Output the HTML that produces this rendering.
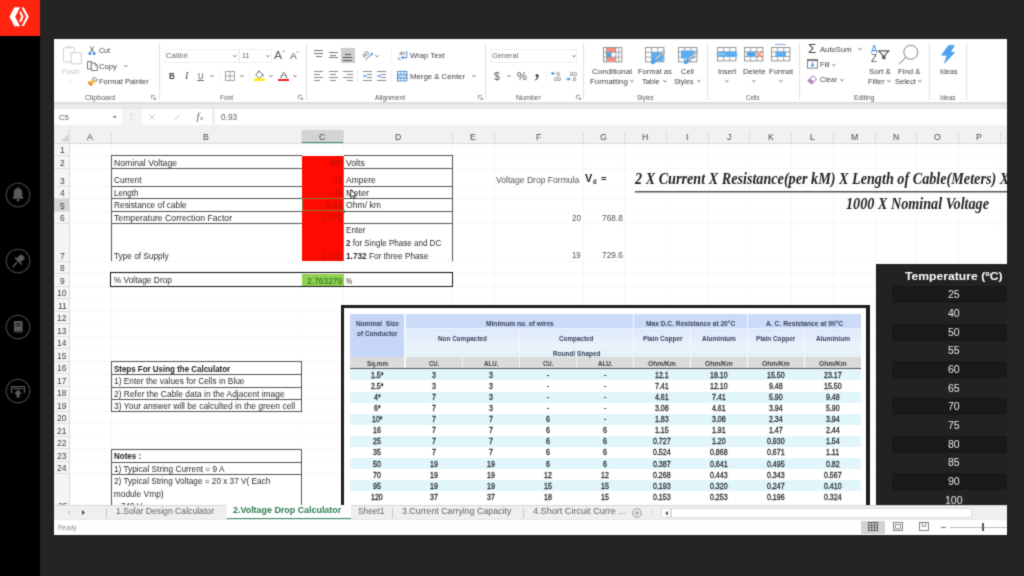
<!DOCTYPE html>
<html lang="en">
<head>
<meta charset="utf-8">
<title>Voltage Drop Calculator</title>
<style>
html,body{margin:0;padding:0;}
body{width:1024px;height:576px;overflow:hidden;background:#242424;position:relative;font-family:'Liberation Sans', sans-serif;}
#stage{position:absolute;left:0;top:0;width:1024px;height:576px;overflow:hidden;filter:url(#soft);}
#stage div,#stage span,#stage svg{position:absolute;}
#stage span{white-space:pre;transform-origin:0 50%;}
#stage svg{overflow:visible;}
#stage svg text{font-family:'Liberation Sans', sans-serif;}
</style>
</head>
<body>
<svg width="0" height="0" style="position:absolute"><defs><filter id="soft" x="0" y="0" width="100%" height="100%" color-interpolation-filters="sRGB"><feConvolveMatrix order="3" kernelMatrix="1 3 1 3 16 3 1 3 1" divisor="32" edgeMode="duplicate" preserveAlpha="true"/></filter></defs></svg>
<div id="stage">
<div style="left:0.00px;top:0.00px;width:1024.00px;height:576.00px;background:#242424;"></div>
<div style="left:0.00px;top:0.00px;width:40.00px;height:576.00px;background:#000;"></div>
<div style="left:0.00px;top:0.00px;width:40.00px;height:36.00px;background:#ff2410;"></div>
<svg style="left:0.00px;top:0.00px;" width="40.00" height="36.00" viewBox="0 0 40 36">
<polygon points="9.5,16.75 14.4,7.2 20.1,7.2 15.2,16.75 20.1,26.2 14.4,26.2" fill="#fff"/>
<polygon points="21.5,7.6 23.9,7.6 28.8,16.75 23.9,25.9 21.5,25.9 26.2,16.75" fill="#fff"/>
<polygon points="19.1,12.2 21.1,11.2 23.7,16.75 21.1,22.3 19.1,21.3 21.2,16.75" fill="#fff"/>
</svg>
<svg style="left:5.30px;top:182.00px;" width="26.00" height="26.00" viewBox="0 0 26 26"><circle cx="13" cy="13" r="11.8" fill="none" stroke="#484848" stroke-width="1.1"/><path d="M13 6.2c-2.7 0-4.3 2-4.3 4.6v3.6l-1.5 2.4h11.6l-1.5-2.4v-3.6c0-2.6-1.6-4.6-4.3-4.6z" fill="#5a5a5a"/><circle cx="13" cy="18.3" r="1.3" fill="#5a5a5a"/><rect x="12.3" y="4.8" width="1.4" height="2" fill="#5a5a5a"/></svg>
<svg style="left:5.30px;top:248.30px;" width="26.00" height="26.00" viewBox="0 0 26 26"><circle cx="13" cy="13" r="11.8" fill="none" stroke="#484848" stroke-width="1.1"/><g fill="#5a5a5a" stroke="#5a5a5a"><path d="M13.2 8.2l3.2-2 3.6 3.8-2.2 3-1.2-.2-2.4 2.2-3.4-3.6 2.4-2.4z" stroke="none"/><line x1="12" y1="14.2" x2="7.6" y2="19.2" stroke-width="1.3"/><line x1="10" y1="9.4" x2="16.8" y2="16.4" stroke-width="1.5"/></g></svg>
<svg style="left:5.30px;top:313.70px;" width="26.00" height="26.00" viewBox="0 0 26 26"><circle cx="13" cy="13" r="11.8" fill="none" stroke="#484848" stroke-width="1.1"/><rect x="9" y="7" width="8.6" height="11.6" rx="0.8" fill="#5a5a5a"/><rect x="10.6" y="9" width="5.4" height="1.1" fill="#222"/><rect x="10.6" y="11" width="5.4" height="1.1" fill="#222"/><rect x="9" y="17" width="8.6" height="0.8" fill="#222"/></svg>
<svg style="left:5.30px;top:377.60px;" width="26.00" height="26.00" viewBox="0 0 26 26"><circle cx="13" cy="13" r="11.8" fill="none" stroke="#484848" stroke-width="1.1"/><path d="M6.6 15V8.6h12.8V15" fill="none" stroke="#5a5a5a" stroke-width="1.3"/><rect x="8.4" y="10.2" width="9.2" height="1.1" fill="#5a5a5a"/><path d="M13 11.6l4 4.4h-2.4v3.6h-3.2V16H9z" fill="#5a5a5a"/></svg>
<div style="left:54.00px;top:39.00px;width:953.00px;height:495.50px;background:#fff;"></div>
<div style="left:54.00px;top:102.00px;width:953.00px;height:7.00px;background:#e9e9e9;"></div>
<div style="left:54.00px;top:102.00px;width:953.00px;height:1.50px;background:#dedede;"></div>
<div style="left:54.00px;top:109.00px;width:953.00px;height:15.50px;background:#fff;"></div>
<div style="left:54.00px;top:124.50px;width:953.00px;height:19.00px;background:#f1f1f1;"></div>
<div style="left:121.50px;top:109.00px;width:20.00px;height:15.50px;background:#f3f3f3;"></div>
<div style="left:212.00px;top:109.00px;width:2.80px;height:15.50px;background:#f0f0f0;"></div>
<span style="left:59.00px;top:112.10px;transform:scaleX(0.948);font:normal 400 8.0px/11.20px 'Liberation Sans', sans-serif;color:#5a5a5a;">C5</span>
<svg style="left:113.40px;top:116.20px;" width="3.60" height="2.20" viewBox="0 0 3.6 2.2"><polygon points="0,0 3.6,0 1.8,2.2" fill="#666"/></svg>
<div style="left:130.60px;top:113.60px;width:1.00px;height:1.00px;background:#bbb;"></div>
<div style="left:130.60px;top:116.40px;width:1.00px;height:1.00px;background:#bbb;"></div>
<div style="left:130.60px;top:119.20px;width:1.00px;height:1.00px;background:#bbb;"></div>
<svg style="left:148.80px;top:114.20px;" width="6.00" height="6.00" viewBox="0 0 6 6"><path d="M0.5 0.5L5.5 5.5M5.5 0.5L0.5 5.5" stroke="#c4c4c4" stroke-width="0.9" fill="none"/></svg>
<svg style="left:172.60px;top:114.20px;" width="7.00" height="6.00" viewBox="0 0 7 6"><path d="M0.5 3.4L2.6 5.4L6.5 0.6" stroke="#c4c4c4" stroke-width="0.9" fill="none"/></svg>
<span style="left:196.60px;top:110.15px;font:italic 400 10.5px/14.70px 'Liberation Serif', serif;color:#666;">f</span>
<span style="left:199.90px;top:114.00px;font:italic 400 7px/9.80px 'Liberation Serif', serif;color:#666;">x</span>
<span style="left:221.20px;top:111.40px;transform:scaleX(0.918);font:normal 400 9.0px/12.60px 'Liberation Sans', sans-serif;color:#606060;">0.93</span>
<svg style="left:63.00px;top:45.00px;" width="19.00" height="19.50" viewBox="0 0 19 19.5">
<rect x="0.5" y="2.6" width="11" height="14.4" rx="1" fill="#fff" stroke="#cfcfcf" stroke-width="1"/>
<path d="M3.4 2.8L6 0.6L8.6 2.8Z" fill="#fff" stroke="#cfcfcf" stroke-width="0.9"/>
<rect x="8.2" y="7.6" width="10" height="11.2" fill="#fff" stroke="#cfcfcf" stroke-width="1"/></svg>
<span style="left:62.30px;top:66.62px;transform:scaleX(0.926);font:normal 400 7.4px/10.36px 'Liberation Sans', sans-serif;color:#c8c8c8;">Paste</span>
<svg style="left:69.38px;top:80.28px;" width="2.64" height="1.56" viewBox="0 0 4.4 2.6"><polyline points="0.3,0.3 2.2,2.2 4.1,0.3" fill="none" stroke="#d4d4d4" stroke-width="1.05"/></svg>
<svg style="left:88.00px;top:46.00px;" width="8.00" height="9.40" viewBox="0 0 8 9.4"><path d="M2 0.4L5.6 6.2M6 0.4L2.4 6.2" stroke="#666" stroke-width="0.9" fill="none"/>
<circle cx="1.9" cy="7.6" r="1.5" fill="#4b8fdc"/><circle cx="6.1" cy="7.6" r="1.5" fill="#4b8fdc"/></svg>
<span style="left:99.30px;top:46.02px;transform:scaleX(0.955);font:normal 400 7.4px/10.36px 'Liberation Sans', sans-serif;color:#3e3e3e;">Cut</span>
<svg style="left:86.50px;top:61.00px;" width="11.00" height="10.00" viewBox="0 0 11 10"><path d="M0.5 0.5H4.4V8H0.5Z" fill="#fff" stroke="#666" stroke-width="0.9"/>
<path d="M4.2 2H8L10.3 4.3V9.5H4.2Z" fill="#fff" stroke="#666" stroke-width="0.9"/><path d="M8 2V4.3H10.3" fill="none" stroke="#666" stroke-width="0.8"/></svg>
<span style="left:99.30px;top:62.02px;transform:scaleX(1.025);font:normal 400 7.4px/10.36px 'Liberation Sans', sans-serif;color:#3e3e3e;">Copy</span>
<svg style="left:123.85px;top:65.19px;" width="3.70" height="2.18" viewBox="0 0 4.4 2.6"><polyline points="0.3,0.3 2.2,2.2 4.1,0.3" fill="none" stroke="#555" stroke-width="1.05"/></svg>
<svg style="left:87.00px;top:76.50px;" width="11.00" height="9.60" viewBox="0 0 11 9.6"><path d="M6.6 0.4L10.4 2.4L9.2 4.6L5.4 2.6Z" fill="#fff" stroke="#666" stroke-width="0.8"/>
<path d="M5.6 2.8L8.4 4.6L4.2 9.2L0.6 5.6Z" fill="#f8bf45"/><path d="M0.6 5.6L4.2 9.2L5.4 7.8L1.8 4.6Z" fill="#ea6a3a"/></svg>
<span style="left:99.30px;top:77.22px;transform:scaleX(1.017);font:normal 400 7.4px/10.36px 'Liberation Sans', sans-serif;color:#3e3e3e;">Format Painter</span>
<span style="left:84.50px;top:92.90px;transform:scaleX(1.011);font:normal 400 7px/9.80px 'Liberation Sans', sans-serif;color:#585858;">Clipboard</span>
<svg style="left:151.20px;top:95.00px;" width="5.00" height="5.00" viewBox="0 0 5 5"><path d="M0.4 4V0.4H4" fill="none" stroke="#888" stroke-width="0.8"/><path d="M1.8 1.8L4.4 4.4M4.4 2.4V4.4H2.4" fill="none" stroke="#888" stroke-width="0.8"/></svg>
<div style="left:158.50px;top:43.00px;width:1.00px;height:57.00px;background:#e2e2e2;"></div>
<div style="left:164.80px;top:48.50px;width:74.20px;height:14.30px;box-sizing:border-box;border:1px solid #efefef;background:#fff;"></div>
<div style="left:238.50px;top:48.50px;width:33.00px;height:14.30px;box-sizing:border-box;border:1px solid #efefef;background:#fff;"></div>
<span style="left:166.20px;top:51.04px;transform:scaleX(0.986);font:normal 400 7.8px/10.92px 'Liberation Sans', sans-serif;color:#666;">Calibri</span>
<svg style="left:233.15px;top:55.29px;" width="3.70" height="2.18" viewBox="0 0 4.4 2.6"><polyline points="0.3,0.3 2.2,2.2 4.1,0.3" fill="none" stroke="#555" stroke-width="1.05"/></svg>
<span style="left:241.60px;top:51.04px;transform:scaleX(0.914);font:normal 400 7.8px/10.92px 'Liberation Sans', sans-serif;color:#666;">11</span>
<svg style="left:265.85px;top:55.29px;" width="3.70" height="2.18" viewBox="0 0 4.4 2.6"><polyline points="0.3,0.3 2.2,2.2 4.1,0.3" fill="none" stroke="#555" stroke-width="1.05"/></svg>
<span style="left:274.30px;top:47.28px;transform:scaleX(1.047);font:normal 400 11.6px/16.24px 'Liberation Sans', sans-serif;color:#5a5a5a;">A</span>
<svg style="left:282.00px;top:50.20px;" width="3.40" height="2.20" viewBox="0 0 3.4 2.2"><polyline points="0.3,1.9 1.7,0.4 3.1,1.9" fill="none" stroke="#4b8fdc" stroke-width="0.8"/></svg>
<span style="left:290.00px;top:49.38px;transform:scaleX(1.061);font:normal 400 9.6px/13.44px 'Liberation Sans', sans-serif;color:#555;">A</span>
<svg style="left:296.40px;top:50.90px;" width="3.40" height="2.20" viewBox="0 0 3.4 2.2"><polyline points="0.3,0.4 1.7,1.9 3.1,0.4" fill="none" stroke="#4b8fdc" stroke-width="0.8"/></svg>
<span style="left:168.70px;top:69.28px;transform:scaleX(0.836);font:normal 700 9.6px/13.44px 'Liberation Sans', sans-serif;color:#444;">B</span>
<span style="left:184.60px;top:69.14px;transform:scaleX(1.041);font:italic 400 9.8px/13.72px 'Liberation Serif', serif;color:#555;">I</span>
<span style="left:197.70px;top:69.78px;transform:scaleX(0.884);font:normal 400 8.6px/12.04px 'Liberation Sans', sans-serif;color:#555;">U</span>
<div style="left:197.20px;top:79.65px;width:6.40px;height:0.90px;background:#666;"></div>
<svg style="left:210.45px;top:75.39px;" width="3.70" height="2.18" viewBox="0 0 4.4 2.6"><polyline points="0.3,0.3 2.2,2.2 4.1,0.3" fill="none" stroke="#555" stroke-width="1.05"/></svg>
<div style="left:219.80px;top:70.00px;width:1.00px;height:12.00px;background:#f0f0f0;"></div>
<svg style="left:224.80px;top:71.00px;" width="10.00" height="10.00" viewBox="0 0 10 10"><rect x="0.5" y="0.5" width="9" height="9" fill="none" stroke="#9a9a9a" stroke-width="0.9"/><path d="M5 0.5V9.5M0.5 5H9.5" stroke="#9a9a9a" stroke-width="0.9"/></svg>
<svg style="left:239.95px;top:75.39px;" width="3.70" height="2.18" viewBox="0 0 4.4 2.6"><polyline points="0.3,0.3 2.2,2.2 4.1,0.3" fill="none" stroke="#555" stroke-width="1.05"/></svg>
<div style="left:249.30px;top:70.00px;width:1.00px;height:12.00px;background:#f0f0f0;"></div>
<svg style="left:254.00px;top:70.40px;" width="11.00" height="11.00" viewBox="0 0 11 11"><path d="M5 1L9 5L5 8.4L1.6 5Z" fill="#fff" stroke="#666" stroke-width="0.9"/>
<path d="M3.4 3L6 0.6" stroke="#666" stroke-width="0.8" fill="none"/>
<path d="M8.8 3.4Q10.4 5.6 9.6 6.6Q8.4 6.4 8.8 3.4Z" fill="#3b7dd8"/>
<rect x="0" y="8.3" width="10.8" height="2.7" fill="#ffe81a"/></svg>
<svg style="left:268.85px;top:75.39px;" width="3.70" height="2.18" viewBox="0 0 4.4 2.6"><polyline points="0.3,0.3 2.2,2.2 4.1,0.3" fill="none" stroke="#555" stroke-width="1.05"/></svg>
<span style="left:279.80px;top:68.38px;transform:scaleX(1.171);font:normal 400 9.6px/13.44px 'Liberation Sans', sans-serif;color:#555;">A</span>
<div style="left:278.20px;top:78.80px;width:10.80px;height:2.60px;background:#ee1c1c;"></div>
<svg style="left:293.45px;top:75.39px;" width="3.70" height="2.18" viewBox="0 0 4.4 2.6"><polyline points="0.3,0.3 2.2,2.2 4.1,0.3" fill="none" stroke="#555" stroke-width="1.05"/></svg>
<span style="left:220.20px;top:92.90px;transform:scaleX(0.928);font:normal 400 7px/9.80px 'Liberation Sans', sans-serif;color:#585858;">Font</span>
<svg style="left:298.20px;top:95.00px;" width="5.00" height="5.00" viewBox="0 0 5 5"><path d="M0.4 4V0.4H4" fill="none" stroke="#888" stroke-width="0.8"/><path d="M1.8 1.8L4.4 4.4M4.4 2.4V4.4H2.4" fill="none" stroke="#888" stroke-width="0.8"/></svg>
<div style="left:305.80px;top:43.00px;width:1.00px;height:57.00px;background:#e2e2e2;"></div>
<div style="left:314.00px;top:50.25px;width:9.30px;height:0.90px;background:#777;"></div>
<div style="left:314.00px;top:53.05px;width:9.30px;height:0.90px;background:#777;"></div>
<div style="left:315.65px;top:55.75px;width:6.00px;height:0.90px;background:#777;"></div>
<div style="left:328.70px;top:51.75px;width:9.30px;height:0.90px;background:#777;"></div>
<div style="left:330.35px;top:54.65px;width:6.00px;height:0.90px;background:#777;"></div>
<div style="left:328.70px;top:57.35px;width:9.30px;height:0.90px;background:#777;"></div>
<div style="left:340.50px;top:48.20px;width:14.80px;height:14.80px;background:#cdcdcd;"></div>
<div style="left:344.85px;top:53.95px;width:6.00px;height:0.90px;background:#555;"></div>
<div style="left:343.20px;top:56.85px;width:9.30px;height:0.90px;background:#555;"></div>
<div style="left:343.20px;top:59.65px;width:9.30px;height:0.90px;background:#555;"></div>
<svg style="left:362.00px;top:50.00px;" width="12.00" height="11.00" viewBox="0 0 12 11"><text x="0.2" y="6.6" font-size="6.6" fill="#666" transform="rotate(-38 3 5)">ab</text>
<path d="M3.4 9.8L10.4 3.6" stroke="#3b7dd8" stroke-width="1" fill="none"/><path d="M10.9 3.1L8.4 3.5L10.4 5.6Z" fill="#3b7dd8"/></svg>
<svg style="left:375.35px;top:55.29px;" width="3.70" height="2.18" viewBox="0 0 4.4 2.6"><polyline points="0.3,0.3 2.2,2.2 4.1,0.3" fill="none" stroke="#555" stroke-width="1.05"/></svg>
<div style="left:390.80px;top:49.00px;width:1.00px;height:13.00px;background:#f0f0f0;"></div>
<svg style="left:398.00px;top:50.40px;" width="9.60" height="10.60" viewBox="0 0 9.6 10.6"><text x="1.2" y="4.9" font-size="5.6" fill="#666">ab</text>
<text x="0" y="10" font-size="5.6" fill="#666">c</text>
<path d="M8.8 1V7.6H4.6" stroke="#3b7dd8" stroke-width="0.9" fill="none"/><path d="M3.2 7.6L5.4 5.8V9.4Z" fill="#3b7dd8"/></svg>
<span style="left:409.70px;top:51.18px;transform:scaleX(1.018);font:normal 400 7.6px/10.64px 'Liberation Sans', sans-serif;color:#3e3e3e;">Wrap Text</span>
<div style="left:314.00px;top:71.45px;width:9.30px;height:0.90px;background:#8a8a8a;"></div>
<div style="left:314.00px;top:74.15px;width:6.00px;height:0.90px;background:#8a8a8a;"></div>
<div style="left:314.00px;top:76.95px;width:9.30px;height:0.90px;background:#8a8a8a;"></div>
<div style="left:314.00px;top:79.65px;width:6.00px;height:0.90px;background:#8a8a8a;"></div>
<div style="left:328.70px;top:71.45px;width:9.30px;height:0.90px;background:#8a8a8a;"></div>
<div style="left:330.35px;top:74.15px;width:6.00px;height:0.90px;background:#8a8a8a;"></div>
<div style="left:328.70px;top:76.95px;width:9.30px;height:0.90px;background:#8a8a8a;"></div>
<div style="left:330.35px;top:79.65px;width:6.00px;height:0.90px;background:#8a8a8a;"></div>
<div style="left:343.40px;top:71.45px;width:9.30px;height:0.90px;background:#8a8a8a;"></div>
<div style="left:346.70px;top:74.15px;width:6.00px;height:0.90px;background:#8a8a8a;"></div>
<div style="left:343.40px;top:76.95px;width:9.30px;height:0.90px;background:#8a8a8a;"></div>
<div style="left:346.70px;top:79.65px;width:6.00px;height:0.90px;background:#8a8a8a;"></div>
<div style="left:357.00px;top:70.00px;width:1.00px;height:12.00px;background:#f0f0f0;"></div>
<div style="left:362.50px;top:71.45px;width:9.30px;height:0.90px;background:#8a8a8a;"></div>
<div style="left:362.50px;top:79.65px;width:9.30px;height:0.90px;background:#8a8a8a;"></div>
<div style="left:366.70px;top:74.15px;width:5.10px;height:0.90px;background:#8a8a8a;"></div>
<div style="left:366.70px;top:76.95px;width:5.10px;height:0.90px;background:#8a8a8a;"></div>
<svg style="left:362.50px;top:74.00px;" width="4.00" height="4.00" viewBox="0 0 4 4"><path d="M3.8 2H1" stroke="#3b7dd8" stroke-width="0.9"/><path d="M0 2L1.8 0.4V3.6Z" fill="#3b7dd8"/></svg>
<div style="left:377.20px;top:71.45px;width:9.30px;height:0.90px;background:#8a8a8a;"></div>
<div style="left:377.20px;top:79.65px;width:9.30px;height:0.90px;background:#8a8a8a;"></div>
<div style="left:381.40px;top:74.15px;width:5.10px;height:0.90px;background:#8a8a8a;"></div>
<div style="left:381.40px;top:76.95px;width:5.10px;height:0.90px;background:#8a8a8a;"></div>
<svg style="left:377.20px;top:74.00px;" width="4.00" height="4.00" viewBox="0 0 4 4"><path d="M0.2 2H3" stroke="#3b7dd8" stroke-width="0.9"/><path d="M4 2L2.2 0.4V3.6Z" fill="#3b7dd8"/></svg>
<div style="left:390.80px;top:70.00px;width:1.00px;height:12.00px;background:#f0f0f0;"></div>
<svg style="left:396.70px;top:70.70px;" width="10.40" height="10.40" viewBox="0 0 10.4 10.4"><rect x="0.5" y="0.5" width="9.4" height="9.4" fill="#fff" stroke="#4a86c8" stroke-width="0.9"/>
<rect x="0.5" y="3.2" width="9.4" height="4" fill="#8ec2f2" stroke="#4a86c8" stroke-width="0.7"/>
<path d="M3.5 0.5V3.2M6.9 0.5V3.2M3.5 7.2V9.9M6.9 7.2V9.9" stroke="#4a86c8" stroke-width="0.7"/>
<path d="M1.6 5.2H8.8" stroke="#fff" stroke-width="0.8"/></svg>
<span style="left:409.70px;top:71.68px;transform:scaleX(1.026);font:normal 400 7.6px/10.64px 'Liberation Sans', sans-serif;color:#3e3e3e;">Merge &amp; Center</span>
<svg style="left:471.85px;top:75.39px;" width="3.70" height="2.18" viewBox="0 0 4.4 2.6"><polyline points="0.3,0.3 2.2,2.2 4.1,0.3" fill="none" stroke="#555" stroke-width="1.05"/></svg>
<span style="left:374.50px;top:92.90px;transform:scaleX(0.970);font:normal 400 7px/9.80px 'Liberation Sans', sans-serif;color:#585858;">Alignment</span>
<svg style="left:477.50px;top:95.00px;" width="5.00" height="5.00" viewBox="0 0 5 5"><path d="M0.4 4V0.4H4" fill="none" stroke="#888" stroke-width="0.8"/><path d="M1.8 1.8L4.4 4.4M4.4 2.4V4.4H2.4" fill="none" stroke="#888" stroke-width="0.8"/></svg>
<div style="left:484.50px;top:43.00px;width:1.00px;height:57.00px;background:#e2e2e2;"></div>
<div style="left:490.30px;top:48.50px;width:87.20px;height:14.30px;box-sizing:border-box;border:1px solid #efefef;background:#fff;"></div>
<span style="left:492.00px;top:51.04px;transform:scaleX(0.948);font:normal 400 7.8px/10.92px 'Liberation Sans', sans-serif;color:#666;">General</span>
<svg style="left:571.95px;top:55.29px;" width="3.70" height="2.18" viewBox="0 0 4.4 2.6"><polyline points="0.3,0.3 2.2,2.2 4.1,0.3" fill="none" stroke="#555" stroke-width="1.05"/></svg>
<span style="left:494.20px;top:68.80px;transform:scaleX(0.947);font:normal 400 11px/15.40px 'Liberation Sans', sans-serif;color:#555;">$</span>
<svg style="left:507.35px;top:75.39px;" width="3.70" height="2.18" viewBox="0 0 4.4 2.6"><polyline points="0.3,0.3 2.2,2.2 4.1,0.3" fill="none" stroke="#555" stroke-width="1.05"/></svg>
<span style="left:517.00px;top:68.80px;transform:scaleX(1.022);font:normal 400 11px/15.40px 'Liberation Sans', sans-serif;color:#555;">%</span>
<span style="left:534.20px;top:65.50px;transform:scaleX(0.791);font:normal 700 22px/30.80px 'Liberation Serif', serif;color:#444;">’</span>
<div style="left:545.80px;top:70.00px;width:1.00px;height:12.00px;background:#f0f0f0;"></div>
<svg style="left:550.80px;top:71.00px;" width="10.40" height="10.40" viewBox="0 0 10.4 10.4"><path d="M0.8 2.4H4.4" stroke="#3b7dd8" stroke-width="1"/><path d="M0 2.4L2 0.6V4.2Z" fill="#3b7dd8"/>
<text x="5.6" y="4.8" font-size="6" fill="#555">0</text><text x="1.6" y="10.2" font-size="6" fill="#555">.00</text></svg>
<svg style="left:565.80px;top:71.00px;" width="10.40" height="10.40" viewBox="0 0 10.4 10.4"><text x="2.4" y="4.8" font-size="6" fill="#555">.00</text>
<path d="M0 8H3.6" stroke="#3b7dd8" stroke-width="1"/><path d="M4.6 8L2.6 6.2V9.8Z" fill="#3b7dd8"/>
<text x="5.2" y="10.2" font-size="6" fill="#555">.0</text></svg>
<span style="left:515.80px;top:92.90px;transform:scaleX(0.992);font:normal 400 7px/9.80px 'Liberation Sans', sans-serif;color:#585858;">Number</span>
<svg style="left:575.50px;top:95.00px;" width="5.00" height="5.00" viewBox="0 0 5 5"><path d="M0.4 4V0.4H4" fill="none" stroke="#888" stroke-width="0.8"/><path d="M1.8 1.8L4.4 4.4M4.4 2.4V4.4H2.4" fill="none" stroke="#888" stroke-width="0.8"/></svg>
<div style="left:582.50px;top:43.00px;width:1.00px;height:57.00px;background:#e2e2e2;"></div>
<svg style="left:603.00px;top:46.80px;" width="19.40" height="15.40" viewBox="0 0 19.4 15.4"><rect x="0.5" y="0.5" width="18.4" height="14.4" fill="#fff" stroke="#8c8c8c" stroke-width="0.9"/>
<rect x="3.4" y="0.9" width="9.4" height="4.4" fill="#f58d80"/><rect x="3.4" y="10.1" width="9.4" height="4.4" fill="#f58d80"/>
<rect x="3.4" y="5.3" width="5.2" height="4.8" fill="#5a9fe8"/>
<path d="M0.5 5.3H18.9M0.5 10.1H18.9M3.4 0.5V14.9M12.8 0.5V14.9M15.8 0.5V14.9" stroke="#8c8c8c" stroke-width="0.7"/></svg>
<span style="left:592.00px;top:66.82px;transform:scaleX(1.082);font:normal 400 7.4px/10.36px 'Liberation Sans', sans-serif;color:#3e3e3e;">Conditional</span>
<span style="left:589.70px;top:77.12px;transform:scaleX(1.070);font:normal 400 7.4px/10.36px 'Liberation Sans', sans-serif;color:#3e3e3e;">Formatting</span>
<svg style="left:630.35px;top:80.39px;" width="3.70" height="2.18" viewBox="0 0 4.4 2.6"><polyline points="0.3,0.3 2.2,2.2 4.1,0.3" fill="none" stroke="#555" stroke-width="1.05"/></svg>
<svg style="left:645.00px;top:46.80px;" width="19.40" height="15.40" viewBox="0 0 19.4 15.4"><rect x="0.5" y="0.5" width="18.4" height="14.4" fill="#fff" stroke="#8c8c8c" stroke-width="0.9"/><path d="M0.5 5.3H18.9M0.5 10.1H18.9M6.6 0.5V14.9M12.8 0.5V14.9" stroke="#8c8c8c" stroke-width="0.8"/><rect x="6.6" y="5.3" width="11.6" height="9" fill="#5aaef4"/>
<path d="M19.4 4.2L9.4 13.2" stroke="#777" stroke-width="2.4"/><path d="M19.2 4.4L9.6 13" stroke="#e9f2fb" stroke-width="1.1"/>
<ellipse cx="8.6" cy="14.6" rx="3.2" ry="2" fill="#4ea6f2" transform="rotate(-38 8.6 14.6)"/></svg>
<span style="left:637.50px;top:66.82px;transform:scaleX(1.016);font:normal 400 7.4px/10.36px 'Liberation Sans', sans-serif;color:#3e3e3e;">Format as</span>
<span style="left:642.00px;top:77.12px;font:normal 400 7.4px/10.36px 'Liberation Sans', sans-serif;color:#3e3e3e;">Table</span>
<svg style="left:662.55px;top:80.39px;" width="3.70" height="2.18" viewBox="0 0 4.4 2.6"><polyline points="0.3,0.3 2.2,2.2 4.1,0.3" fill="none" stroke="#555" stroke-width="1.05"/></svg>
<svg style="left:678.00px;top:46.80px;" width="19.40" height="15.40" viewBox="0 0 19.4 15.4"><rect x="0.5" y="0.5" width="18.4" height="14.4" fill="#fff" stroke="#8c8c8c" stroke-width="0.9"/><path d="M0.5 5.3H18.9M0.5 10.1H18.9M6.6 0.5V14.9M12.8 0.5V14.9" stroke="#8c8c8c" stroke-width="0.8"/><rect x="3" y="3.4" width="13.4" height="8.2" fill="#5aaef4"/>
<path d="M19.4 4.2L9.4 13.2" stroke="#777" stroke-width="2.4"/><path d="M19.2 4.4L9.6 13" stroke="#e9f2fb" stroke-width="1.1"/>
<ellipse cx="8.6" cy="14.6" rx="3.2" ry="2" fill="#4ea6f2" transform="rotate(-38 8.6 14.6)"/></svg>
<span style="left:681.30px;top:66.82px;transform:scaleX(1.013);font:normal 400 7.4px/10.36px 'Liberation Sans', sans-serif;color:#3e3e3e;">Cell</span>
<span style="left:674.20px;top:77.12px;transform:scaleX(0.968);font:normal 400 7.4px/10.36px 'Liberation Sans', sans-serif;color:#3e3e3e;">Styles</span>
<svg style="left:696.55px;top:80.39px;" width="3.70" height="2.18" viewBox="0 0 4.4 2.6"><polyline points="0.3,0.3 2.2,2.2 4.1,0.3" fill="none" stroke="#555" stroke-width="1.05"/></svg>
<span style="left:636.70px;top:92.90px;transform:scaleX(0.871);font:normal 400 7px/9.80px 'Liberation Sans', sans-serif;color:#585858;">Styles</span>
<div style="left:707.00px;top:43.00px;width:1.00px;height:57.00px;background:#e2e2e2;"></div>
<svg style="left:716.90px;top:47.00px;" width="19.40" height="15.40" viewBox="0 0 19.4 15.4"><rect x="0.5" y="0.5" width="18.4" height="13.4" fill="#fff" stroke="#8c8c8c" stroke-width="0.9"/><path d="M0.5 4.9H18.9M0.5 9.5H18.9M6.6 0.5V13.9M12.8 0.5V13.9" stroke="#8c8c8c" stroke-width="0.8"/><rect x="2.4" y="4.6" width="17.6" height="5.2" fill="#5aaef4"/>
<path d="M-0.8 7.2L2.6 4.4V10Z" fill="#5aaef4"/><path d="M1.4 7.2H8" stroke="#d6eafb" stroke-width="0.8"/></svg>
<span style="left:717.50px;top:66.82px;transform:scaleX(0.990);font:normal 400 7.4px/10.36px 'Liberation Sans', sans-serif;color:#3e3e3e;">Insert</span>
<svg style="left:724.65px;top:80.39px;" width="3.70" height="2.18" viewBox="0 0 4.4 2.6"><polyline points="0.3,0.3 2.2,2.2 4.1,0.3" fill="none" stroke="#555" stroke-width="1.05"/></svg>
<svg style="left:744.20px;top:47.00px;" width="19.40" height="15.40" viewBox="0 0 19.4 15.4"><rect x="0.5" y="0.5" width="18.4" height="13.4" fill="#fff" stroke="#8c8c8c" stroke-width="0.9"/><path d="M0.5 4.9H18.9M0.5 9.5H18.9M6.6 0.5V13.9M12.8 0.5V13.9" stroke="#8c8c8c" stroke-width="0.8"/><rect x="2.6" y="4.6" width="9" height="5.2" fill="#5aaef4"/>
<path d="M5 7.2H10" stroke="#2f74c0" stroke-width="0.8"/>
<path d="M12.4 4L18.4 10.6M18.4 4L12.4 10.6" stroke="#f0704c" stroke-width="1.1" fill="none"/></svg>
<span style="left:742.50px;top:66.82px;transform:scaleX(1.053);font:normal 400 7.4px/10.36px 'Liberation Sans', sans-serif;color:#3e3e3e;">Delete</span>
<svg style="left:751.55px;top:80.39px;" width="3.70" height="2.18" viewBox="0 0 4.4 2.6"><polyline points="0.3,0.3 2.2,2.2 4.1,0.3" fill="none" stroke="#555" stroke-width="1.05"/></svg>
<div style="left:775.40px;top:44.35px;width:11.00px;height:0.90px;background:#8ab4d8;"></div>
<svg style="left:771.30px;top:47.00px;" width="19.40" height="15.40" viewBox="0 0 19.4 15.4"><rect x="0.5" y="0.5" width="18.4" height="13.4" fill="#fff" stroke="#8c8c8c" stroke-width="0.9"/><path d="M0.5 4.9H18.9M0.5 9.5H18.9M6.6 0.5V13.9M12.8 0.5V13.9" stroke="#8c8c8c" stroke-width="0.8"/><rect x="4.4" y="4.6" width="10.6" height="5.2" fill="#5aaef4"/></svg>
<span style="left:768.70px;top:66.82px;transform:scaleX(1.030);font:normal 400 7.4px/10.36px 'Liberation Sans', sans-serif;color:#3e3e3e;">Format</span>
<svg style="left:778.75px;top:80.39px;" width="3.70" height="2.18" viewBox="0 0 4.4 2.6"><polyline points="0.3,0.3 2.2,2.2 4.1,0.3" fill="none" stroke="#555" stroke-width="1.05"/></svg>
<span style="left:746.20px;top:92.90px;transform:scaleX(0.867);font:normal 400 7px/9.80px 'Liberation Sans', sans-serif;color:#585858;">Cells</span>
<div style="left:799.20px;top:43.00px;width:1.00px;height:57.00px;background:#e2e2e2;"></div>
<span style="left:808.00px;top:41.15px;transform:scaleX(1.086);font:normal 400 12.5px/17.50px 'Liberation Sans', sans-serif;color:#484848;">Σ</span>
<span style="left:819.70px;top:44.62px;transform:scaleX(1.039);font:normal 400 7.4px/10.36px 'Liberation Sans', sans-serif;color:#3e3e3e;">AutoSum</span>
<svg style="left:858.45px;top:48.19px;" width="3.70" height="2.18" viewBox="0 0 4.4 2.6"><polyline points="0.3,0.3 2.2,2.2 4.1,0.3" fill="none" stroke="#555" stroke-width="1.05"/></svg>
<svg style="left:806.70px;top:59.30px;" width="11.00" height="9.60" viewBox="0 0 11 9.6"><rect x="0.5" y="0.5" width="10" height="8.6" fill="#fff" stroke="#777" stroke-width="0.9"/>
<rect x="0.5" y="0.5" width="10" height="1.6" fill="#777"/>
<path d="M5.5 3V7" stroke="#3b7dd8" stroke-width="0.9"/><path d="M5.5 8L3.6 5.8H7.4Z" fill="#3b7dd8"/></svg>
<span style="left:819.70px;top:60.02px;transform:scaleX(1.005);font:normal 400 7.4px/10.36px 'Liberation Sans', sans-serif;color:#3e3e3e;">Fill</span>
<svg style="left:832.15px;top:63.79px;" width="3.70" height="2.18" viewBox="0 0 4.4 2.6"><polyline points="0.3,0.3 2.2,2.2 4.1,0.3" fill="none" stroke="#555" stroke-width="1.05"/></svg>
<svg style="left:807.00px;top:74.70px;" width="10.40" height="9.80" viewBox="0 0 10.4 9.8"><path d="M5.8 0.8L9.6 4L4.6 9L0.8 5.8Z" fill="#fff" stroke="#8a5a9c" stroke-width="0.9"/>
<path d="M3.2 3.4L7 6.6L4.6 9L0.8 5.8Z" fill="#b980c8"/></svg>
<span style="left:819.70px;top:75.12px;transform:scaleX(0.979);font:normal 400 7.4px/10.36px 'Liberation Sans', sans-serif;color:#3e3e3e;">Clear</span>
<svg style="left:839.95px;top:78.89px;" width="3.70" height="2.18" viewBox="0 0 4.4 2.6"><polyline points="0.3,0.3 2.2,2.2 4.1,0.3" fill="none" stroke="#555" stroke-width="1.05"/></svg>
<span style="left:870.60px;top:42.96px;transform:scaleX(0.927);font:normal 400 10.2px/14.28px 'Liberation Sans', sans-serif;color:#3b8de0;">A</span>
<span style="left:870.80px;top:51.96px;transform:scaleX(0.978);font:normal 400 10.2px/14.28px 'Liberation Sans', sans-serif;color:#555;">Z</span>
<svg style="left:878.30px;top:50.20px;" width="11.40" height="10.20" viewBox="0 0 11.4 10.2"><path d="M0.6 0.8H10.8L6.9 5.2V9L4.6 8.2V5.2Z" fill="#fff" stroke="#555" stroke-width="1.2"/><rect x="4.8" y="5.4" width="2" height="3" fill="#666"/></svg>
<span style="left:868.70px;top:66.82px;transform:scaleX(1.061);font:normal 400 7.4px/10.36px 'Liberation Sans', sans-serif;color:#3e3e3e;">Sort &amp;</span>
<span style="left:867.50px;top:77.12px;transform:scaleX(1.016);font:normal 400 7.4px/10.36px 'Liberation Sans', sans-serif;color:#3e3e3e;">Filter</span>
<svg style="left:886.95px;top:80.39px;" width="3.70" height="2.18" viewBox="0 0 4.4 2.6"><polyline points="0.3,0.3 2.2,2.2 4.1,0.3" fill="none" stroke="#555" stroke-width="1.05"/></svg>
<svg style="left:898.00px;top:43.50px;" width="22.00" height="22.00" viewBox="0 0 22 22"><circle cx="12.8" cy="8.3" r="7" fill="#fff" stroke="#777" stroke-width="0.9"/><path d="M7.8 13.2L1.2 20" stroke="#777" stroke-width="1"/></svg>
<span style="left:897.50px;top:66.82px;transform:scaleX(1.053);font:normal 400 7.4px/10.36px 'Liberation Sans', sans-serif;color:#3e3e3e;">Find &amp;</span>
<span style="left:894.70px;top:77.12px;transform:scaleX(1.012);font:normal 400 7.4px/10.36px 'Liberation Sans', sans-serif;color:#3e3e3e;">Select</span>
<svg style="left:918.35px;top:80.39px;" width="3.70" height="2.18" viewBox="0 0 4.4 2.6"><polyline points="0.3,0.3 2.2,2.2 4.1,0.3" fill="none" stroke="#555" stroke-width="1.05"/></svg>
<span style="left:853.70px;top:92.90px;transform:scaleX(0.958);font:normal 400 7px/9.80px 'Liberation Sans', sans-serif;color:#585858;">Editing</span>
<div style="left:929.20px;top:43.00px;width:1.00px;height:57.00px;background:#e2e2e2;"></div>
<svg style="left:941.30px;top:45.20px;" width="14.20" height="18.60" viewBox="0 0 14.2 18.6"><path d="M7.6 0.4H13.4L9.4 7.4H13.6L3.4 18.2L6.2 10.2H0.6Z" fill="#4ea1f3" stroke="#2f86e0" stroke-width="0.6"/></svg>
<span style="left:939.50px;top:66.82px;transform:scaleX(0.967);font:normal 400 7.4px/10.36px 'Liberation Sans', sans-serif;color:#3e3e3e;">Ideas</span>
<span style="left:940.00px;top:92.90px;transform:scaleX(0.905);font:normal 400 7px/9.80px 'Liberation Sans', sans-serif;color:#585858;">Ideas</span>
<div style="left:965.80px;top:43.00px;width:1.00px;height:57.00px;background:#e2e2e2;"></div>
<div style="left:54.00px;top:143.50px;width:15.50px;height:361.50px;background:#f5f5f5;"></div>
<div style="left:301.50px;top:130.00px;width:42.00px;height:13.50px;background:#d4d4d4;"></div>
<div style="left:301.50px;top:142.30px;width:42.00px;height:1.30px;background:#3c8a63;"></div>
<div style="left:54.00px;top:198.30px;width:15.50px;height:12.70px;background:#d4d4d4;"></div>
<div style="left:68.50px;top:198.30px;width:1.20px;height:12.70px;background:#3c8a63;"></div>
<div style="left:110.50px;top:143.50px;width:1.00px;height:361.50px;background:#f7f7f7;"></div>
<div style="left:110.50px;top:132.00px;width:1.00px;height:11.00px;background:#dcdcdc;"></div>
<div style="left:301.00px;top:143.50px;width:1.00px;height:361.50px;background:#f7f7f7;"></div>
<div style="left:301.00px;top:132.00px;width:1.00px;height:11.00px;background:#dcdcdc;"></div>
<div style="left:343.00px;top:143.50px;width:1.00px;height:361.50px;background:#f7f7f7;"></div>
<div style="left:343.00px;top:132.00px;width:1.00px;height:11.00px;background:#dcdcdc;"></div>
<div style="left:452.00px;top:143.50px;width:1.00px;height:361.50px;background:#f7f7f7;"></div>
<div style="left:452.00px;top:132.00px;width:1.00px;height:11.00px;background:#dcdcdc;"></div>
<div style="left:493.50px;top:143.50px;width:1.00px;height:361.50px;background:#f7f7f7;"></div>
<div style="left:493.50px;top:132.00px;width:1.00px;height:11.00px;background:#dcdcdc;"></div>
<div style="left:582.50px;top:143.50px;width:1.00px;height:361.50px;background:#f7f7f7;"></div>
<div style="left:582.50px;top:132.00px;width:1.00px;height:11.00px;background:#dcdcdc;"></div>
<div style="left:624.20px;top:143.50px;width:1.00px;height:361.50px;background:#f7f7f7;"></div>
<div style="left:624.20px;top:132.00px;width:1.00px;height:11.00px;background:#dcdcdc;"></div>
<div style="left:665.80px;top:143.50px;width:1.00px;height:361.50px;background:#f7f7f7;"></div>
<div style="left:665.80px;top:132.00px;width:1.00px;height:11.00px;background:#dcdcdc;"></div>
<div style="left:707.50px;top:143.50px;width:1.00px;height:361.50px;background:#f7f7f7;"></div>
<div style="left:707.50px;top:132.00px;width:1.00px;height:11.00px;background:#dcdcdc;"></div>
<div style="left:749.20px;top:143.50px;width:1.00px;height:361.50px;background:#f7f7f7;"></div>
<div style="left:749.20px;top:132.00px;width:1.00px;height:11.00px;background:#dcdcdc;"></div>
<div style="left:790.80px;top:143.50px;width:1.00px;height:361.50px;background:#f7f7f7;"></div>
<div style="left:790.80px;top:132.00px;width:1.00px;height:11.00px;background:#dcdcdc;"></div>
<div style="left:832.80px;top:143.50px;width:1.00px;height:361.50px;background:#f7f7f7;"></div>
<div style="left:832.80px;top:132.00px;width:1.00px;height:11.00px;background:#dcdcdc;"></div>
<div style="left:874.50px;top:143.50px;width:1.00px;height:361.50px;background:#f7f7f7;"></div>
<div style="left:874.50px;top:132.00px;width:1.00px;height:11.00px;background:#dcdcdc;"></div>
<div style="left:916.30px;top:143.50px;width:1.00px;height:361.50px;background:#f7f7f7;"></div>
<div style="left:916.30px;top:132.00px;width:1.00px;height:11.00px;background:#dcdcdc;"></div>
<div style="left:958.00px;top:143.50px;width:1.00px;height:361.50px;background:#f7f7f7;"></div>
<div style="left:958.00px;top:132.00px;width:1.00px;height:11.00px;background:#dcdcdc;"></div>
<div style="left:999.80px;top:143.50px;width:1.00px;height:361.50px;background:#f7f7f7;"></div>
<div style="left:999.80px;top:132.00px;width:1.00px;height:11.00px;background:#dcdcdc;"></div>
<div style="left:69.50px;top:155.00px;width:937.50px;height:1.00px;background:#f7f7f7;"></div>
<div style="left:54.00px;top:155.00px;width:15.50px;height:1.00px;background:#dedede;"></div>
<div style="left:69.50px;top:168.00px;width:937.50px;height:1.00px;background:#f7f7f7;"></div>
<div style="left:54.00px;top:168.00px;width:15.50px;height:1.00px;background:#dedede;"></div>
<div style="left:69.50px;top:185.50px;width:937.50px;height:1.00px;background:#f7f7f7;"></div>
<div style="left:54.00px;top:185.50px;width:15.50px;height:1.00px;background:#dedede;"></div>
<div style="left:69.50px;top:197.80px;width:937.50px;height:1.00px;background:#f7f7f7;"></div>
<div style="left:54.00px;top:197.80px;width:15.50px;height:1.00px;background:#dedede;"></div>
<div style="left:69.50px;top:210.50px;width:937.50px;height:1.00px;background:#f7f7f7;"></div>
<div style="left:54.00px;top:210.50px;width:15.50px;height:1.00px;background:#dedede;"></div>
<div style="left:69.50px;top:223.00px;width:937.50px;height:1.00px;background:#f7f7f7;"></div>
<div style="left:54.00px;top:223.00px;width:15.50px;height:1.00px;background:#dedede;"></div>
<div style="left:69.50px;top:260.50px;width:937.50px;height:1.00px;background:#f7f7f7;"></div>
<div style="left:54.00px;top:260.50px;width:15.50px;height:1.00px;background:#dedede;"></div>
<div style="left:69.50px;top:273.00px;width:937.50px;height:1.00px;background:#f7f7f7;"></div>
<div style="left:54.00px;top:273.00px;width:15.50px;height:1.00px;background:#dedede;"></div>
<div style="left:69.50px;top:285.70px;width:937.50px;height:1.00px;background:#f7f7f7;"></div>
<div style="left:54.00px;top:285.70px;width:15.50px;height:1.00px;background:#dedede;"></div>
<div style="left:69.50px;top:298.20px;width:937.50px;height:1.00px;background:#f7f7f7;"></div>
<div style="left:54.00px;top:298.20px;width:15.50px;height:1.00px;background:#dedede;"></div>
<div style="left:69.50px;top:310.70px;width:937.50px;height:1.00px;background:#f7f7f7;"></div>
<div style="left:54.00px;top:310.70px;width:15.50px;height:1.00px;background:#dedede;"></div>
<div style="left:69.50px;top:323.20px;width:937.50px;height:1.00px;background:#f7f7f7;"></div>
<div style="left:54.00px;top:323.20px;width:15.50px;height:1.00px;background:#dedede;"></div>
<div style="left:69.50px;top:335.70px;width:937.50px;height:1.00px;background:#f7f7f7;"></div>
<div style="left:54.00px;top:335.70px;width:15.50px;height:1.00px;background:#dedede;"></div>
<div style="left:69.50px;top:348.20px;width:937.50px;height:1.00px;background:#f7f7f7;"></div>
<div style="left:54.00px;top:348.20px;width:15.50px;height:1.00px;background:#dedede;"></div>
<div style="left:69.50px;top:360.70px;width:937.50px;height:1.00px;background:#f7f7f7;"></div>
<div style="left:54.00px;top:360.70px;width:15.50px;height:1.00px;background:#dedede;"></div>
<div style="left:69.50px;top:373.20px;width:937.50px;height:1.00px;background:#f7f7f7;"></div>
<div style="left:54.00px;top:373.20px;width:15.50px;height:1.00px;background:#dedede;"></div>
<div style="left:69.50px;top:385.70px;width:937.50px;height:1.00px;background:#f7f7f7;"></div>
<div style="left:54.00px;top:385.70px;width:15.50px;height:1.00px;background:#dedede;"></div>
<div style="left:69.50px;top:398.20px;width:937.50px;height:1.00px;background:#f7f7f7;"></div>
<div style="left:54.00px;top:398.20px;width:15.50px;height:1.00px;background:#dedede;"></div>
<div style="left:69.50px;top:410.70px;width:937.50px;height:1.00px;background:#f7f7f7;"></div>
<div style="left:54.00px;top:410.70px;width:15.50px;height:1.00px;background:#dedede;"></div>
<div style="left:69.50px;top:423.20px;width:937.50px;height:1.00px;background:#f7f7f7;"></div>
<div style="left:54.00px;top:423.20px;width:15.50px;height:1.00px;background:#dedede;"></div>
<div style="left:69.50px;top:435.70px;width:937.50px;height:1.00px;background:#f7f7f7;"></div>
<div style="left:54.00px;top:435.70px;width:15.50px;height:1.00px;background:#dedede;"></div>
<div style="left:69.50px;top:448.20px;width:937.50px;height:1.00px;background:#f7f7f7;"></div>
<div style="left:54.00px;top:448.20px;width:15.50px;height:1.00px;background:#dedede;"></div>
<div style="left:69.50px;top:460.70px;width:937.50px;height:1.00px;background:#f7f7f7;"></div>
<div style="left:54.00px;top:460.70px;width:15.50px;height:1.00px;background:#dedede;"></div>
<div style="left:69.50px;top:473.20px;width:937.50px;height:1.00px;background:#f7f7f7;"></div>
<div style="left:54.00px;top:473.20px;width:15.50px;height:1.00px;background:#dedede;"></div>
<div style="left:54.00px;top:143.00px;width:953.00px;height:1.00px;background:#dadada;"></div>
<div style="left:69.00px;top:130.00px;width:1.00px;height:375.00px;background:#dadada;"></div>
<svg style="left:60.50px;top:133.50px;" width="7.50" height="7.50" viewBox="0 0 7.5 7.5"><polygon points="7.5,0 7.5,7.5 0,7.5" fill="#cfcfcf"/></svg>
<span style="left:87.33px;top:131.36px;transform:scaleX(0.950);font:normal 400 9.2px/12.88px 'Liberation Sans', sans-serif;color:#484848;">A</span>
<span style="left:203.33px;top:131.36px;transform:scaleX(0.950);font:normal 400 9.2px/12.88px 'Liberation Sans', sans-serif;color:#484848;">B</span>
<span style="left:319.35px;top:131.36px;transform:scaleX(0.950);font:normal 400 9.2px/12.88px 'Liberation Sans', sans-serif;color:#484848;">C</span>
<span style="left:394.85px;top:131.36px;transform:scaleX(0.950);font:normal 400 9.2px/12.88px 'Liberation Sans', sans-serif;color:#484848;">D</span>
<span style="left:470.33px;top:131.36px;transform:scaleX(0.950);font:normal 400 9.2px/12.88px 'Liberation Sans', sans-serif;color:#484848;">E</span>
<span style="left:535.83px;top:131.36px;transform:scaleX(0.950);font:normal 400 9.2px/12.88px 'Liberation Sans', sans-serif;color:#484848;">F</span>
<span style="left:600.45px;top:131.36px;transform:scaleX(0.950);font:normal 400 9.2px/12.88px 'Liberation Sans', sans-serif;color:#484848;">G</span>
<span style="left:642.35px;top:131.36px;transform:scaleX(0.950);font:normal 400 9.2px/12.88px 'Liberation Sans', sans-serif;color:#484848;">H</span>
<span style="left:685.93px;top:131.36px;transform:scaleX(0.950);font:normal 400 9.2px/12.88px 'Liberation Sans', sans-serif;color:#484848;">I</span>
<span style="left:726.67px;top:131.36px;transform:scaleX(0.950);font:normal 400 9.2px/12.88px 'Liberation Sans', sans-serif;color:#484848;">J</span>
<span style="left:767.58px;top:131.36px;transform:scaleX(0.950);font:normal 400 9.2px/12.88px 'Liberation Sans', sans-serif;color:#484848;">K</span>
<span style="left:809.87px;top:131.36px;transform:scaleX(0.950);font:normal 400 9.2px/12.88px 'Liberation Sans', sans-serif;color:#484848;">L</span>
<span style="left:850.51px;top:131.36px;transform:scaleX(0.950);font:normal 400 9.2px/12.88px 'Liberation Sans', sans-serif;color:#484848;">M</span>
<span style="left:892.75px;top:131.36px;transform:scaleX(0.950);font:normal 400 9.2px/12.88px 'Liberation Sans', sans-serif;color:#484848;">N</span>
<span style="left:934.25px;top:131.36px;transform:scaleX(0.950);font:normal 400 9.2px/12.88px 'Liberation Sans', sans-serif;color:#484848;">O</span>
<span style="left:976.48px;top:131.36px;transform:scaleX(0.950);font:normal 400 9.2px/12.88px 'Liberation Sans', sans-serif;color:#484848;">P</span>
<span style="left:59.64px;top:144.36px;transform:scaleX(0.920);font:normal 400 9.2px/12.88px 'Liberation Sans', sans-serif;color:#3c3c3c;">1</span>
<span style="left:59.64px;top:156.86px;transform:scaleX(0.920);font:normal 400 9.2px/12.88px 'Liberation Sans', sans-serif;color:#3c3c3c;">2</span>
<span style="left:59.64px;top:174.56px;transform:scaleX(0.920);font:normal 400 9.2px/12.88px 'Liberation Sans', sans-serif;color:#3c3c3c;">3</span>
<span style="left:59.64px;top:187.01px;transform:scaleX(0.920);font:normal 400 9.2px/12.88px 'Liberation Sans', sans-serif;color:#3c3c3c;">4</span>
<span style="left:59.64px;top:199.51px;transform:scaleX(0.920);font:normal 400 9.2px/12.88px 'Liberation Sans', sans-serif;color:#3c3c3c;">5</span>
<span style="left:59.64px;top:212.11px;transform:scaleX(0.920);font:normal 400 9.2px/12.88px 'Liberation Sans', sans-serif;color:#3c3c3c;">6</span>
<span style="left:59.64px;top:249.56px;transform:scaleX(0.920);font:normal 400 9.2px/12.88px 'Liberation Sans', sans-serif;color:#3c3c3c;">7</span>
<span style="left:59.64px;top:262.11px;transform:scaleX(0.920);font:normal 400 9.2px/12.88px 'Liberation Sans', sans-serif;color:#3c3c3c;">8</span>
<span style="left:59.64px;top:274.71px;transform:scaleX(0.920);font:normal 400 9.2px/12.88px 'Liberation Sans', sans-serif;color:#3c3c3c;">9</span>
<span style="left:57.29px;top:287.31px;transform:scaleX(0.920);font:normal 400 9.2px/12.88px 'Liberation Sans', sans-serif;color:#3c3c3c;">10</span>
<span style="left:57.61px;top:299.81px;transform:scaleX(0.920);font:normal 400 9.2px/12.88px 'Liberation Sans', sans-serif;color:#3c3c3c;">11</span>
<span style="left:57.29px;top:312.31px;transform:scaleX(0.920);font:normal 400 9.2px/12.88px 'Liberation Sans', sans-serif;color:#3c3c3c;">12</span>
<span style="left:57.29px;top:324.81px;transform:scaleX(0.920);font:normal 400 9.2px/12.88px 'Liberation Sans', sans-serif;color:#3c3c3c;">13</span>
<span style="left:57.29px;top:337.31px;transform:scaleX(0.920);font:normal 400 9.2px/12.88px 'Liberation Sans', sans-serif;color:#3c3c3c;">14</span>
<span style="left:57.29px;top:349.81px;transform:scaleX(0.920);font:normal 400 9.2px/12.88px 'Liberation Sans', sans-serif;color:#3c3c3c;">15</span>
<span style="left:57.29px;top:362.31px;transform:scaleX(0.920);font:normal 400 9.2px/12.88px 'Liberation Sans', sans-serif;color:#3c3c3c;">16</span>
<span style="left:57.29px;top:374.81px;transform:scaleX(0.920);font:normal 400 9.2px/12.88px 'Liberation Sans', sans-serif;color:#3c3c3c;">17</span>
<span style="left:57.29px;top:387.31px;transform:scaleX(0.920);font:normal 400 9.2px/12.88px 'Liberation Sans', sans-serif;color:#3c3c3c;">18</span>
<span style="left:57.29px;top:399.81px;transform:scaleX(0.920);font:normal 400 9.2px/12.88px 'Liberation Sans', sans-serif;color:#3c3c3c;">19</span>
<span style="left:57.29px;top:412.31px;transform:scaleX(0.920);font:normal 400 9.2px/12.88px 'Liberation Sans', sans-serif;color:#3c3c3c;">20</span>
<span style="left:57.29px;top:424.81px;transform:scaleX(0.920);font:normal 400 9.2px/12.88px 'Liberation Sans', sans-serif;color:#3c3c3c;">21</span>
<span style="left:57.29px;top:437.31px;transform:scaleX(0.920);font:normal 400 9.2px/12.88px 'Liberation Sans', sans-serif;color:#3c3c3c;">22</span>
<span style="left:57.29px;top:449.81px;transform:scaleX(0.920);font:normal 400 9.2px/12.88px 'Liberation Sans', sans-serif;color:#3c3c3c;">23</span>
<span style="left:57.29px;top:462.31px;transform:scaleX(0.920);font:normal 400 9.2px/12.88px 'Liberation Sans', sans-serif;color:#3c3c3c;">24</span>
<div style="left:54.5px;top:496px;width:15px;height:9px;overflow:hidden"><span style="left:3.2px;top:4px;font:400 9.2px/12.9px 'Liberation Sans', sans-serif;color:#4a4a4a;transform:scaleX(0.92)">25</span></div>
<div style="left:111.00px;top:155.50px;width:341.50px;height:105.50px;background:#fff;"></div>
<div style="left:111.00px;top:273.50px;width:341.50px;height:12.70px;background:#fff;"></div>
<div style="left:111.00px;top:361.30px;width:190.50px;height:50.20px;background:#fff;"></div>
<div style="left:111.00px;top:449.50px;width:190.50px;height:55.50px;background:#fff;"></div>
<div style="left:301.50px;top:155.50px;width:42.00px;height:105.70px;background:#ff0a00;"></div>
<div style="left:301.50px;top:274.00px;width:42.00px;height:12.00px;background:#92d050;"></div>
<div style="left:111.00px;top:155.00px;width:190.50px;height:1.00px;background:#555;"></div>
<div style="left:343.50px;top:155.00px;width:109.00px;height:1.00px;background:#555;"></div>
<div style="left:111.00px;top:168.00px;width:190.50px;height:1.00px;background:#555;"></div>
<div style="left:343.50px;top:168.00px;width:109.00px;height:1.00px;background:#555;"></div>
<div style="left:111.00px;top:185.50px;width:190.50px;height:1.00px;background:#555;"></div>
<div style="left:343.50px;top:185.50px;width:109.00px;height:1.00px;background:#555;"></div>
<div style="left:111.00px;top:197.80px;width:190.50px;height:1.00px;background:#555;"></div>
<div style="left:343.50px;top:197.80px;width:109.00px;height:1.00px;background:#555;"></div>
<div style="left:111.00px;top:210.50px;width:190.50px;height:1.00px;background:#555;"></div>
<div style="left:343.50px;top:210.50px;width:109.00px;height:1.00px;background:#555;"></div>
<div style="left:111.00px;top:223.00px;width:190.50px;height:1.00px;background:#555;"></div>
<div style="left:343.50px;top:223.00px;width:109.00px;height:1.00px;background:#555;"></div>
<div style="left:110.70px;top:155.50px;width:1.00px;height:105.50px;background:#555;"></div>
<div style="left:452.00px;top:155.50px;width:1.00px;height:105.50px;background:#555;"></div>
<div style="left:343.00px;top:155.50px;width:1.00px;height:105.50px;background:#c8564c;"></div>
<div style="left:301.50px;top:197.80px;width:42.50px;height:13.70px;box-sizing:border-box;border:1.2px solid #8a7a3a;background:transparent;"></div>
<div style="left:342.60px;top:210.40px;width:2.40px;height:2.20px;background:#3c8a63;"></div>
<div style="left:110.20px;top:272.40px;width:343.10px;height:14.80px;box-sizing:border-box;border:1.7px solid #161616;background:transparent;"></div>
<div style="left:111.00px;top:360.80px;width:190.80px;height:1.00px;background:#555;"></div>
<div style="left:111.00px;top:373.80px;width:190.80px;height:1.00px;background:#555;"></div>
<div style="left:111.00px;top:386.80px;width:190.80px;height:1.00px;background:#555;"></div>
<div style="left:111.00px;top:399.00px;width:190.80px;height:1.00px;background:#555;"></div>
<div style="left:111.00px;top:411.10px;width:190.80px;height:1.00px;background:#555;"></div>
<div style="left:110.70px;top:361.30px;width:1.00px;height:50.30px;background:#555;"></div>
<div style="left:301.10px;top:361.30px;width:1.00px;height:50.30px;background:#555;"></div>
<div style="left:111.00px;top:449.00px;width:190.80px;height:1.00px;background:#555;"></div>
<div style="left:111.00px;top:461.50px;width:190.80px;height:1.00px;background:#555;"></div>
<div style="left:111.00px;top:474.10px;width:190.80px;height:1.00px;background:#555;"></div>
<div style="left:110.70px;top:449.50px;width:1.00px;height:55.50px;background:#555;"></div>
<div style="left:301.10px;top:449.50px;width:1.00px;height:55.50px;background:#555;"></div>
<span style="left:113.80px;top:157.52px;transform:scaleX(1.033);font:normal 400 8.4px/11.76px 'Liberation Sans', sans-serif;color:#2c2c2c;">Nominal Voltage</span>
<span style="left:113.80px;top:175.12px;transform:scaleX(0.984);font:normal 400 8.4px/11.76px 'Liberation Sans', sans-serif;color:#2c2c2c;">Current</span>
<span style="left:113.80px;top:187.72px;transform:scaleX(0.956);font:normal 400 8.4px/11.76px 'Liberation Sans', sans-serif;color:#2c2c2c;">Length</span>
<span style="left:113.80px;top:200.32px;transform:scaleX(0.995);font:normal 400 8.4px/11.76px 'Liberation Sans', sans-serif;color:#2c2c2c;">Resistance of cable</span>
<span style="left:113.80px;top:212.82px;transform:scaleX(1.035);font:normal 400 8.4px/11.76px 'Liberation Sans', sans-serif;color:#2c2c2c;">Temperature Correction Factor</span>
<span style="left:113.80px;top:250.52px;transform:scaleX(0.984);font:normal 400 8.4px/11.76px 'Liberation Sans', sans-serif;color:#2c2c2c;">Type of Supply</span>
<span style="left:113.80px;top:275.32px;font:normal 400 8.4px/11.76px 'Liberation Sans', sans-serif;color:#2c2c2c;">% Voltage Drop</span>
<span style="left:345.60px;top:157.52px;transform:scaleX(1.035);font:normal 400 8.4px/11.76px 'Liberation Sans', sans-serif;color:#2c2c2c;">Volts</span>
<span style="left:345.60px;top:175.42px;transform:scaleX(1.013);font:normal 400 8.4px/11.76px 'Liberation Sans', sans-serif;color:#2c2c2c;">Ampere</span>
<span style="left:345.60px;top:187.92px;transform:scaleX(1.074);font:normal 400 8.4px/11.76px 'Liberation Sans', sans-serif;color:#2c2c2c;">Meter</span>
<span style="left:345.60px;top:200.42px;transform:scaleX(1.027);font:normal 400 8.4px/11.76px 'Liberation Sans', sans-serif;color:#2c2c2c;">Ohm/ km</span>
<span style="left:345.60px;top:225.42px;transform:scaleX(0.968);font:normal 400 8.4px/11.76px 'Liberation Sans', sans-serif;color:#2c2c2c;">Enter</span>
<span style="left:345.60px;top:238.12px;transform:scaleX(0.960);font:normal 400 8.4px/11.76px 'Liberation Sans', sans-serif;color:#2c2c2c;"><b>2</b> for Single Phase and DC</span>
<span style="left:345.60px;top:250.52px;transform:scaleX(0.988);font:normal 400 8.4px/11.76px 'Liberation Sans', sans-serif;color:#2c2c2c;"><b>1.732</b> For three Phase</span>
<span style="left:345.60px;top:275.62px;transform:scaleX(0.818);font:normal 400 8.4px/11.76px 'Liberation Sans', sans-serif;color:#2c2c2c;">%</span>
<span style="left:307.20px;top:275.62px;font:normal 400 8.4px/11.76px 'Liberation Sans', sans-serif;color:#226a22;">2.763279</span>
<span style="left:329.00px;top:157.52px;transform:scaleX(0.930);font:normal 400 8.4px/11.76px 'Liberation Sans', sans-serif;color:#b8140c;">400</span>
<span style="left:333.50px;top:175.42px;transform:scaleX(0.911);font:normal 400 8.4px/11.76px 'Liberation Sans', sans-serif;color:#b8140c;">18</span>
<span style="left:333.50px;top:187.92px;transform:scaleX(0.911);font:normal 400 8.4px/11.76px 'Liberation Sans', sans-serif;color:#b8140c;">40</span>
<span style="left:326.00px;top:200.42px;transform:scaleX(0.981);font:normal 400 8.4px/11.76px 'Liberation Sans', sans-serif;color:#b8140c;">0.93</span>
<span style="left:322.00px;top:212.82px;transform:scaleX(0.954);font:normal 400 8.4px/11.76px 'Liberation Sans', sans-serif;color:#b8140c;">1.275</span>
<span style="left:322.00px;top:250.52px;transform:scaleX(0.954);font:normal 400 8.4px/11.76px 'Liberation Sans', sans-serif;color:#b8140c;">1.732</span>
<svg style="left:349.60px;top:188.80px;" width="7.60" height="10.60" viewBox="0 0 7.6 10.6"><path d="M0.6 0.6V8.6L2.6 6.8L4.1 10L5.5 9.4L4 6.4H6.8Z" fill="#fff" stroke="#222" stroke-width="0.9"/></svg>
<span style="left:113.80px;top:363.52px;transform:scaleX(0.949);font:normal 700 8.4px/11.76px 'Liberation Sans', sans-serif;color:#222;">Steps For Using the Calculator</span>
<span style="left:113.80px;top:376.12px;transform:scaleX(0.994);font:normal 400 8.4px/11.76px 'Liberation Sans', sans-serif;color:#2c2c2c;">1) Enter the values for Cells in Blue</span>
<span style="left:113.80px;top:388.82px;transform:scaleX(1.007);font:normal 400 8.4px/11.76px 'Liberation Sans', sans-serif;color:#2c2c2c;">2) Refer the Cable data in the Adjacent image</span>
<span style="left:113.80px;top:401.12px;transform:scaleX(1.016);font:normal 400 8.4px/11.76px 'Liberation Sans', sans-serif;color:#2c2c2c;">3) Your answer will be calculted in the green cell</span>
<span style="left:113.80px;top:451.12px;transform:scaleX(0.958);font:normal 700 8.4px/11.76px 'Liberation Sans', sans-serif;color:#222;">Notes :</span>
<span style="left:113.80px;top:463.62px;transform:scaleX(0.988);font:normal 400 8.4px/11.76px 'Liberation Sans', sans-serif;color:#2c2c2c;">1) Typical String Current = 9 A</span>
<span style="left:113.80px;top:476.12px;transform:scaleX(0.981);font:normal 400 8.4px/11.76px 'Liberation Sans', sans-serif;color:#2c2c2c;">2) Typical String Voltage = 20 x 37 V( Each</span>
<span style="left:113.80px;top:488.62px;font:normal 400 8.4px/11.76px 'Liberation Sans', sans-serif;color:#2c2c2c;">module Vmp)</span>
<div style="left:111.5px;top:500.5px;width:100px;height:4.5px;overflow:hidden"><span style="left:2.4px;top:0.5px;font:400 8.4px/11.8px 'Liberation Sans', sans-serif;color:#3a3a3a;transform:scaleX(0.97)">= 740 V</span></div>
<span style="left:495.60px;top:174.86px;transform:scaleX(1.045);font:normal 400 8.2px/11.48px 'Liberation Sans', sans-serif;color:#555;">Voltage Drop Formula</span>
<span style="left:585.00px;top:171.14px;font:normal 700 10.8px/15.12px 'Liberation Sans', sans-serif;color:#222;">V</span>
<span style="left:592.60px;top:177.48px;transform:scaleX(0.893);font:normal 700 6.6px/9.24px 'Liberation Sans', sans-serif;color:#222;">d</span>
<span style="left:601.30px;top:173.00px;transform:scaleX(1.045);font:normal 700 9px/12.60px 'Liberation Sans', sans-serif;color:#222;">=</span>
<span style="left:572.00px;top:213.06px;transform:scaleX(0.988);font:normal 400 8.2px/11.48px 'Liberation Sans', sans-serif;color:#555;">20</span>
<span style="left:601.80px;top:213.06px;transform:scaleX(1.024);font:normal 400 8.2px/11.48px 'Liberation Sans', sans-serif;color:#555;">768.8</span>
<span style="left:572.40px;top:250.26px;transform:scaleX(0.944);font:normal 400 8.2px/11.48px 'Liberation Sans', sans-serif;color:#555;">19</span>
<span style="left:601.80px;top:250.26px;transform:scaleX(1.024);font:normal 400 8.2px/11.48px 'Liberation Sans', sans-serif;color:#555;">729.6</span>
<div style="left:630px;top:165px;width:377px;height:55px;overflow:hidden" id="fclip"></div>
<span style="left:635.20px;top:167.72px;transform:scaleX(0.865);font:italic 700 16.4px/22.96px 'Liberation Serif', serif;color:#1e1e1e;">2 X Current X Resistance(per kM) X Length of Cable(Meters) X</span>
<svg style="left:635.00px;top:190.00px;" width="372.00" height="4.00" viewBox="0 0 372 4"><line x1="0" y1="1.8" x2="372" y2="1.8" stroke="#505050" stroke-width="1.4"/></svg>
<span style="left:845.60px;top:192.92px;transform:scaleX(0.865);font:italic 700 16.4px/22.96px 'Liberation Serif', serif;color:#1e1e1e;">1000 X Nominal Voltage</span>
<div style="left:1007.00px;top:0.00px;width:17.00px;height:576.00px;background:#242424;"></div>
<div style="left:340.50px;top:305.30px;width:529.00px;height:199.70px;background:#1c1c1c;"></div>
<div style="left:343.60px;top:308.40px;width:522.80px;height:196.60px;background:#fff;"></div>
<div style="left:349.50px;top:313.80px;width:55.50px;height:43.20px;background:#c6d6f6;"></div>
<div style="left:405.00px;top:313.80px;width:456.00px;height:15.00px;background:#cbdaf7;"></div>
<div style="left:405.0px;top:328.8px;width:456.0px;height:28.2px;background:linear-gradient(#dde8fb,#eaf3fb 60%,#e4f1f6)"></div>
<div style="left:349.50px;top:357.00px;width:511.50px;height:11.40px;background:#d9dcda;"></div>
<div style="left:349.50px;top:368.30px;width:511.50px;height:1.00px;background:#555;"></div>
<div style="left:404.40px;top:313.80px;width:1.20px;height:54.40px;background:#f4f8fd;"></div>
<div style="left:632.70px;top:313.80px;width:1.20px;height:54.40px;background:#f4f8fd;"></div>
<div style="left:746.80px;top:313.80px;width:1.20px;height:54.40px;background:#f4f8fd;"></div>
<div style="left:518.70px;top:328.80px;width:1.20px;height:39.40px;background:#f4f8fd;"></div>
<div style="left:689.80px;top:328.80px;width:1.00px;height:39.40px;background:#f2f7fd;"></div>
<div style="left:803.90px;top:328.80px;width:1.00px;height:39.40px;background:#f2f7fd;"></div>
<div style="left:461.80px;top:357.00px;width:1.00px;height:11.20px;background:#eef2f2;"></div>
<div style="left:575.90px;top:357.00px;width:1.00px;height:11.20px;background:#eef2f2;"></div>
<div style="left:405.00px;top:328.30px;width:456.00px;height:1.00px;background:#eef3fc;"></div>
<div style="left:349.50px;top:369.40px;width:511.50px;height:11.09px;background:#e0f6fb;"></div>
<div style="left:349.50px;top:391.58px;width:511.50px;height:11.09px;background:#e0f6fb;"></div>
<div style="left:349.50px;top:413.76px;width:511.50px;height:11.09px;background:#e0f6fb;"></div>
<div style="left:349.50px;top:435.94px;width:511.50px;height:11.09px;background:#e0f6fb;"></div>
<div style="left:349.50px;top:458.12px;width:511.50px;height:11.09px;background:#e0f6fb;"></div>
<div style="left:349.50px;top:480.30px;width:511.50px;height:11.09px;background:#e0f6fb;"></div>
<span style="left:355.80px;top:318.58px;transform:scaleX(0.871);font:normal 700 7.6px/10.64px 'Liberation Sans', sans-serif;color:#39415a;">Nominal  Size</span>
<span style="left:357.00px;top:329.38px;transform:scaleX(0.850);font:normal 700 7.6px/10.64px 'Liberation Sans', sans-serif;color:#39415a;">of Conductor</span>
<span style="left:485.50px;top:318.58px;transform:scaleX(0.873);font:normal 700 7.6px/10.64px 'Liberation Sans', sans-serif;color:#39415a;">Minimum no. of wires</span>
<span style="left:645.80px;top:318.58px;transform:scaleX(0.873);font:normal 700 7.6px/10.64px 'Liberation Sans', sans-serif;color:#39415a;">Max D.C. Resistance at 20°C</span>
<span style="left:765.50px;top:318.58px;transform:scaleX(0.883);font:normal 700 7.6px/10.64px 'Liberation Sans', sans-serif;color:#39415a;">A. C. Resistance at 90°C</span>
<span style="left:438.00px;top:333.88px;transform:scaleX(0.841);font:normal 700 7.6px/10.64px 'Liberation Sans', sans-serif;color:#39415a;">Non Compacted</span>
<span style="left:559.30px;top:333.88px;transform:scaleX(0.834);font:normal 700 7.6px/10.64px 'Liberation Sans', sans-serif;color:#39415a;">Compacted</span>
<span style="left:553.00px;top:349.38px;transform:scaleX(0.853);font:normal 700 7.6px/10.64px 'Liberation Sans', sans-serif;color:#39415a;">Round/ Shaped</span>
<span style="left:642.50px;top:333.88px;transform:scaleX(0.843);font:normal 700 7.6px/10.64px 'Liberation Sans', sans-serif;color:#39415a;">Plain Copper</span>
<span style="left:702.00px;top:333.88px;transform:scaleX(0.861);font:normal 700 7.6px/10.64px 'Liberation Sans', sans-serif;color:#39415a;">Aluminium</span>
<span style="left:756.30px;top:333.88px;transform:scaleX(0.837);font:normal 700 7.6px/10.64px 'Liberation Sans', sans-serif;color:#39415a;">Plain Copper</span>
<span style="left:816.00px;top:333.88px;transform:scaleX(0.867);font:normal 700 7.6px/10.64px 'Liberation Sans', sans-serif;color:#39415a;">Aluminium</span>
<span style="left:367.00px;top:358.78px;transform:scaleX(0.829);font:normal 700 7.6px/10.64px 'Liberation Sans', sans-serif;color:#3c3c3c;">Sq.mm</span>
<span style="left:428.50px;top:358.78px;transform:scaleX(0.788);font:normal 700 7.6px/10.64px 'Liberation Sans', sans-serif;color:#3c3c3c;">CU.</span>
<span style="left:483.55px;top:358.78px;transform:scaleX(0.818);font:normal 700 7.6px/10.64px 'Liberation Sans', sans-serif;color:#3c3c3c;">ALU.</span>
<span style="left:542.70px;top:358.78px;transform:scaleX(0.788);font:normal 700 7.6px/10.64px 'Liberation Sans', sans-serif;color:#3c3c3c;">CU.</span>
<span style="left:597.60px;top:358.78px;transform:scaleX(0.818);font:normal 700 7.6px/10.64px 'Liberation Sans', sans-serif;color:#3c3c3c;">ALU.</span>
<span style="left:647.90px;top:358.78px;transform:scaleX(0.878);font:normal 700 7.6px/10.64px 'Liberation Sans', sans-serif;color:#3c3c3c;">Ohm/Km</span>
<span style="left:704.95px;top:358.78px;transform:scaleX(0.878);font:normal 700 7.6px/10.64px 'Liberation Sans', sans-serif;color:#3c3c3c;">Ohm/Km</span>
<span style="left:762.00px;top:358.78px;transform:scaleX(0.878);font:normal 700 7.6px/10.64px 'Liberation Sans', sans-serif;color:#3c3c3c;">Ohm/Km</span>
<span style="left:818.80px;top:358.78px;transform:scaleX(0.878);font:normal 700 7.6px/10.64px 'Liberation Sans', sans-serif;color:#3c3c3c;">Ohm/Km</span>
<span style="left:370.99px;top:369.82px;transform:scaleX(0.840);font:normal 400 8.4px/11.76px 'Liberation Sans', sans-serif;color:#2a2a2a;-webkit-text-stroke:0.3px #2a2a2a;">1.5*</span>
<span style="left:431.69px;top:369.82px;transform:scaleX(0.840);font:normal 400 8.4px/11.76px 'Liberation Sans', sans-serif;color:#2a2a2a;-webkit-text-stroke:0.3px #2a2a2a;">3</span>
<span style="left:488.84px;top:369.82px;transform:scaleX(0.840);font:normal 400 8.4px/11.76px 'Liberation Sans', sans-serif;color:#2a2a2a;-webkit-text-stroke:0.3px #2a2a2a;">3</span>
<span style="left:546.68px;top:369.82px;transform:scaleX(0.840);font:normal 400 8.4px/11.76px 'Liberation Sans', sans-serif;color:#2a2a2a;-webkit-text-stroke:0.3px #2a2a2a;">-</span>
<span style="left:603.68px;top:369.82px;transform:scaleX(0.840);font:normal 400 8.4px/11.76px 'Liberation Sans', sans-serif;color:#2a2a2a;-webkit-text-stroke:0.3px #2a2a2a;">-</span>
<span style="left:654.95px;top:369.82px;transform:scaleX(0.840);font:normal 400 8.4px/11.76px 'Liberation Sans', sans-serif;color:#2a2a2a;-webkit-text-stroke:0.3px #2a2a2a;">12.1</span>
<span style="left:710.04px;top:369.82px;transform:scaleX(0.840);font:normal 400 8.4px/11.76px 'Liberation Sans', sans-serif;color:#2a2a2a;-webkit-text-stroke:0.3px #2a2a2a;">18.10</span>
<span style="left:767.09px;top:369.82px;transform:scaleX(0.840);font:normal 400 8.4px/11.76px 'Liberation Sans', sans-serif;color:#2a2a2a;-webkit-text-stroke:0.3px #2a2a2a;">15.50</span>
<span style="left:823.89px;top:369.82px;transform:scaleX(0.840);font:normal 400 8.4px/11.76px 'Liberation Sans', sans-serif;color:#2a2a2a;-webkit-text-stroke:0.3px #2a2a2a;">23.17</span>
<span style="left:370.99px;top:380.91px;transform:scaleX(0.840);font:normal 400 8.4px/11.76px 'Liberation Sans', sans-serif;color:#2a2a2a;-webkit-text-stroke:0.3px #2a2a2a;">2.5*</span>
<span style="left:431.69px;top:380.91px;transform:scaleX(0.840);font:normal 400 8.4px/11.76px 'Liberation Sans', sans-serif;color:#2a2a2a;-webkit-text-stroke:0.3px #2a2a2a;">3</span>
<span style="left:488.84px;top:380.91px;transform:scaleX(0.840);font:normal 400 8.4px/11.76px 'Liberation Sans', sans-serif;color:#2a2a2a;-webkit-text-stroke:0.3px #2a2a2a;">3</span>
<span style="left:546.68px;top:380.91px;transform:scaleX(0.840);font:normal 400 8.4px/11.76px 'Liberation Sans', sans-serif;color:#2a2a2a;-webkit-text-stroke:0.3px #2a2a2a;">-</span>
<span style="left:603.68px;top:380.91px;transform:scaleX(0.840);font:normal 400 8.4px/11.76px 'Liberation Sans', sans-serif;color:#2a2a2a;-webkit-text-stroke:0.3px #2a2a2a;">-</span>
<span style="left:654.95px;top:380.91px;transform:scaleX(0.840);font:normal 400 8.4px/11.76px 'Liberation Sans', sans-serif;color:#2a2a2a;-webkit-text-stroke:0.3px #2a2a2a;">7.41</span>
<span style="left:710.04px;top:380.91px;transform:scaleX(0.840);font:normal 400 8.4px/11.76px 'Liberation Sans', sans-serif;color:#2a2a2a;-webkit-text-stroke:0.3px #2a2a2a;">12.10</span>
<span style="left:769.05px;top:380.91px;transform:scaleX(0.840);font:normal 400 8.4px/11.76px 'Liberation Sans', sans-serif;color:#2a2a2a;-webkit-text-stroke:0.3px #2a2a2a;">9.48</span>
<span style="left:823.89px;top:380.91px;transform:scaleX(0.840);font:normal 400 8.4px/11.76px 'Liberation Sans', sans-serif;color:#2a2a2a;-webkit-text-stroke:0.3px #2a2a2a;">15.50</span>
<span style="left:373.92px;top:392.00px;transform:scaleX(0.840);font:normal 400 8.4px/11.76px 'Liberation Sans', sans-serif;color:#2a2a2a;-webkit-text-stroke:0.3px #2a2a2a;">4*</span>
<span style="left:431.69px;top:392.00px;transform:scaleX(0.840);font:normal 400 8.4px/11.76px 'Liberation Sans', sans-serif;color:#2a2a2a;-webkit-text-stroke:0.3px #2a2a2a;">7</span>
<span style="left:488.84px;top:392.00px;transform:scaleX(0.840);font:normal 400 8.4px/11.76px 'Liberation Sans', sans-serif;color:#2a2a2a;-webkit-text-stroke:0.3px #2a2a2a;">3</span>
<span style="left:546.68px;top:392.00px;transform:scaleX(0.840);font:normal 400 8.4px/11.76px 'Liberation Sans', sans-serif;color:#2a2a2a;-webkit-text-stroke:0.3px #2a2a2a;">-</span>
<span style="left:603.68px;top:392.00px;transform:scaleX(0.840);font:normal 400 8.4px/11.76px 'Liberation Sans', sans-serif;color:#2a2a2a;-webkit-text-stroke:0.3px #2a2a2a;">-</span>
<span style="left:654.95px;top:392.00px;transform:scaleX(0.840);font:normal 400 8.4px/11.76px 'Liberation Sans', sans-serif;color:#2a2a2a;-webkit-text-stroke:0.3px #2a2a2a;">4.61</span>
<span style="left:712.00px;top:392.00px;transform:scaleX(0.840);font:normal 400 8.4px/11.76px 'Liberation Sans', sans-serif;color:#2a2a2a;-webkit-text-stroke:0.3px #2a2a2a;">7.41</span>
<span style="left:769.05px;top:392.00px;transform:scaleX(0.840);font:normal 400 8.4px/11.76px 'Liberation Sans', sans-serif;color:#2a2a2a;-webkit-text-stroke:0.3px #2a2a2a;">5.90</span>
<span style="left:825.85px;top:392.00px;transform:scaleX(0.840);font:normal 400 8.4px/11.76px 'Liberation Sans', sans-serif;color:#2a2a2a;-webkit-text-stroke:0.3px #2a2a2a;">9.48</span>
<span style="left:373.92px;top:403.09px;transform:scaleX(0.840);font:normal 400 8.4px/11.76px 'Liberation Sans', sans-serif;color:#2a2a2a;-webkit-text-stroke:0.3px #2a2a2a;">6*</span>
<span style="left:431.69px;top:403.09px;transform:scaleX(0.840);font:normal 400 8.4px/11.76px 'Liberation Sans', sans-serif;color:#2a2a2a;-webkit-text-stroke:0.3px #2a2a2a;">7</span>
<span style="left:488.84px;top:403.09px;transform:scaleX(0.840);font:normal 400 8.4px/11.76px 'Liberation Sans', sans-serif;color:#2a2a2a;-webkit-text-stroke:0.3px #2a2a2a;">3</span>
<span style="left:546.68px;top:403.09px;transform:scaleX(0.840);font:normal 400 8.4px/11.76px 'Liberation Sans', sans-serif;color:#2a2a2a;-webkit-text-stroke:0.3px #2a2a2a;">-</span>
<span style="left:603.68px;top:403.09px;transform:scaleX(0.840);font:normal 400 8.4px/11.76px 'Liberation Sans', sans-serif;color:#2a2a2a;-webkit-text-stroke:0.3px #2a2a2a;">-</span>
<span style="left:654.95px;top:403.09px;transform:scaleX(0.840);font:normal 400 8.4px/11.76px 'Liberation Sans', sans-serif;color:#2a2a2a;-webkit-text-stroke:0.3px #2a2a2a;">3.08</span>
<span style="left:712.00px;top:403.09px;transform:scaleX(0.840);font:normal 400 8.4px/11.76px 'Liberation Sans', sans-serif;color:#2a2a2a;-webkit-text-stroke:0.3px #2a2a2a;">4.61</span>
<span style="left:769.05px;top:403.09px;transform:scaleX(0.840);font:normal 400 8.4px/11.76px 'Liberation Sans', sans-serif;color:#2a2a2a;-webkit-text-stroke:0.3px #2a2a2a;">3.94</span>
<span style="left:825.85px;top:403.09px;transform:scaleX(0.840);font:normal 400 8.4px/11.76px 'Liberation Sans', sans-serif;color:#2a2a2a;-webkit-text-stroke:0.3px #2a2a2a;">5.90</span>
<span style="left:371.97px;top:414.18px;transform:scaleX(0.840);font:normal 400 8.4px/11.76px 'Liberation Sans', sans-serif;color:#2a2a2a;-webkit-text-stroke:0.3px #2a2a2a;">10*</span>
<span style="left:431.69px;top:414.18px;transform:scaleX(0.840);font:normal 400 8.4px/11.76px 'Liberation Sans', sans-serif;color:#2a2a2a;-webkit-text-stroke:0.3px #2a2a2a;">7</span>
<span style="left:488.84px;top:414.18px;transform:scaleX(0.840);font:normal 400 8.4px/11.76px 'Liberation Sans', sans-serif;color:#2a2a2a;-webkit-text-stroke:0.3px #2a2a2a;">7</span>
<span style="left:545.89px;top:414.18px;transform:scaleX(0.840);font:normal 400 8.4px/11.76px 'Liberation Sans', sans-serif;color:#2a2a2a;-webkit-text-stroke:0.3px #2a2a2a;">6</span>
<span style="left:603.68px;top:414.18px;transform:scaleX(0.840);font:normal 400 8.4px/11.76px 'Liberation Sans', sans-serif;color:#2a2a2a;-webkit-text-stroke:0.3px #2a2a2a;">-</span>
<span style="left:654.95px;top:414.18px;transform:scaleX(0.840);font:normal 400 8.4px/11.76px 'Liberation Sans', sans-serif;color:#2a2a2a;-webkit-text-stroke:0.3px #2a2a2a;">1.83</span>
<span style="left:712.00px;top:414.18px;transform:scaleX(0.840);font:normal 400 8.4px/11.76px 'Liberation Sans', sans-serif;color:#2a2a2a;-webkit-text-stroke:0.3px #2a2a2a;">3.08</span>
<span style="left:769.05px;top:414.18px;transform:scaleX(0.840);font:normal 400 8.4px/11.76px 'Liberation Sans', sans-serif;color:#2a2a2a;-webkit-text-stroke:0.3px #2a2a2a;">2.34</span>
<span style="left:825.85px;top:414.18px;transform:scaleX(0.840);font:normal 400 8.4px/11.76px 'Liberation Sans', sans-serif;color:#2a2a2a;-webkit-text-stroke:0.3px #2a2a2a;">3.94</span>
<span style="left:373.33px;top:425.27px;transform:scaleX(0.840);font:normal 400 8.4px/11.76px 'Liberation Sans', sans-serif;color:#2a2a2a;-webkit-text-stroke:0.3px #2a2a2a;">16</span>
<span style="left:431.69px;top:425.27px;transform:scaleX(0.840);font:normal 400 8.4px/11.76px 'Liberation Sans', sans-serif;color:#2a2a2a;-webkit-text-stroke:0.3px #2a2a2a;">7</span>
<span style="left:488.84px;top:425.27px;transform:scaleX(0.840);font:normal 400 8.4px/11.76px 'Liberation Sans', sans-serif;color:#2a2a2a;-webkit-text-stroke:0.3px #2a2a2a;">7</span>
<span style="left:545.89px;top:425.27px;transform:scaleX(0.840);font:normal 400 8.4px/11.76px 'Liberation Sans', sans-serif;color:#2a2a2a;-webkit-text-stroke:0.3px #2a2a2a;">6</span>
<span style="left:602.89px;top:425.27px;transform:scaleX(0.840);font:normal 400 8.4px/11.76px 'Liberation Sans', sans-serif;color:#2a2a2a;-webkit-text-stroke:0.3px #2a2a2a;">6</span>
<span style="left:654.95px;top:425.27px;transform:scaleX(0.840);font:normal 400 8.4px/11.76px 'Liberation Sans', sans-serif;color:#2a2a2a;-webkit-text-stroke:0.3px #2a2a2a;">1.15</span>
<span style="left:712.00px;top:425.27px;transform:scaleX(0.840);font:normal 400 8.4px/11.76px 'Liberation Sans', sans-serif;color:#2a2a2a;-webkit-text-stroke:0.3px #2a2a2a;">1.91</span>
<span style="left:769.05px;top:425.27px;transform:scaleX(0.840);font:normal 400 8.4px/11.76px 'Liberation Sans', sans-serif;color:#2a2a2a;-webkit-text-stroke:0.3px #2a2a2a;">1.47</span>
<span style="left:825.85px;top:425.27px;transform:scaleX(0.840);font:normal 400 8.4px/11.76px 'Liberation Sans', sans-serif;color:#2a2a2a;-webkit-text-stroke:0.3px #2a2a2a;">2.44</span>
<span style="left:373.33px;top:436.36px;transform:scaleX(0.840);font:normal 400 8.4px/11.76px 'Liberation Sans', sans-serif;color:#2a2a2a;-webkit-text-stroke:0.3px #2a2a2a;">25</span>
<span style="left:431.69px;top:436.36px;transform:scaleX(0.840);font:normal 400 8.4px/11.76px 'Liberation Sans', sans-serif;color:#2a2a2a;-webkit-text-stroke:0.3px #2a2a2a;">7</span>
<span style="left:488.84px;top:436.36px;transform:scaleX(0.840);font:normal 400 8.4px/11.76px 'Liberation Sans', sans-serif;color:#2a2a2a;-webkit-text-stroke:0.3px #2a2a2a;">7</span>
<span style="left:545.89px;top:436.36px;transform:scaleX(0.840);font:normal 400 8.4px/11.76px 'Liberation Sans', sans-serif;color:#2a2a2a;-webkit-text-stroke:0.3px #2a2a2a;">6</span>
<span style="left:602.89px;top:436.36px;transform:scaleX(0.840);font:normal 400 8.4px/11.76px 'Liberation Sans', sans-serif;color:#2a2a2a;-webkit-text-stroke:0.3px #2a2a2a;">6</span>
<span style="left:652.99px;top:436.36px;transform:scaleX(0.840);font:normal 400 8.4px/11.76px 'Liberation Sans', sans-serif;color:#2a2a2a;-webkit-text-stroke:0.3px #2a2a2a;">0.727</span>
<span style="left:712.00px;top:436.36px;transform:scaleX(0.840);font:normal 400 8.4px/11.76px 'Liberation Sans', sans-serif;color:#2a2a2a;-webkit-text-stroke:0.3px #2a2a2a;">1.20</span>
<span style="left:767.09px;top:436.36px;transform:scaleX(0.840);font:normal 400 8.4px/11.76px 'Liberation Sans', sans-serif;color:#2a2a2a;-webkit-text-stroke:0.3px #2a2a2a;">0.930</span>
<span style="left:825.85px;top:436.36px;transform:scaleX(0.840);font:normal 400 8.4px/11.76px 'Liberation Sans', sans-serif;color:#2a2a2a;-webkit-text-stroke:0.3px #2a2a2a;">1.54</span>
<span style="left:373.33px;top:447.45px;transform:scaleX(0.840);font:normal 400 8.4px/11.76px 'Liberation Sans', sans-serif;color:#2a2a2a;-webkit-text-stroke:0.3px #2a2a2a;">35</span>
<span style="left:431.69px;top:447.45px;transform:scaleX(0.840);font:normal 400 8.4px/11.76px 'Liberation Sans', sans-serif;color:#2a2a2a;-webkit-text-stroke:0.3px #2a2a2a;">7</span>
<span style="left:488.84px;top:447.45px;transform:scaleX(0.840);font:normal 400 8.4px/11.76px 'Liberation Sans', sans-serif;color:#2a2a2a;-webkit-text-stroke:0.3px #2a2a2a;">7</span>
<span style="left:545.89px;top:447.45px;transform:scaleX(0.840);font:normal 400 8.4px/11.76px 'Liberation Sans', sans-serif;color:#2a2a2a;-webkit-text-stroke:0.3px #2a2a2a;">6</span>
<span style="left:602.89px;top:447.45px;transform:scaleX(0.840);font:normal 400 8.4px/11.76px 'Liberation Sans', sans-serif;color:#2a2a2a;-webkit-text-stroke:0.3px #2a2a2a;">6</span>
<span style="left:652.99px;top:447.45px;transform:scaleX(0.840);font:normal 400 8.4px/11.76px 'Liberation Sans', sans-serif;color:#2a2a2a;-webkit-text-stroke:0.3px #2a2a2a;">0.524</span>
<span style="left:710.04px;top:447.45px;transform:scaleX(0.840);font:normal 400 8.4px/11.76px 'Liberation Sans', sans-serif;color:#2a2a2a;-webkit-text-stroke:0.3px #2a2a2a;">0.868</span>
<span style="left:767.09px;top:447.45px;transform:scaleX(0.840);font:normal 400 8.4px/11.76px 'Liberation Sans', sans-serif;color:#2a2a2a;-webkit-text-stroke:0.3px #2a2a2a;">0.671</span>
<span style="left:826.11px;top:447.45px;transform:scaleX(0.840);font:normal 400 8.4px/11.76px 'Liberation Sans', sans-serif;color:#2a2a2a;-webkit-text-stroke:0.3px #2a2a2a;">1.11</span>
<span style="left:373.33px;top:458.54px;transform:scaleX(0.840);font:normal 400 8.4px/11.76px 'Liberation Sans', sans-serif;color:#2a2a2a;-webkit-text-stroke:0.3px #2a2a2a;">50</span>
<span style="left:429.73px;top:458.54px;transform:scaleX(0.840);font:normal 400 8.4px/11.76px 'Liberation Sans', sans-serif;color:#2a2a2a;-webkit-text-stroke:0.3px #2a2a2a;">19</span>
<span style="left:486.88px;top:458.54px;transform:scaleX(0.840);font:normal 400 8.4px/11.76px 'Liberation Sans', sans-serif;color:#2a2a2a;-webkit-text-stroke:0.3px #2a2a2a;">19</span>
<span style="left:545.89px;top:458.54px;transform:scaleX(0.840);font:normal 400 8.4px/11.76px 'Liberation Sans', sans-serif;color:#2a2a2a;-webkit-text-stroke:0.3px #2a2a2a;">6</span>
<span style="left:602.89px;top:458.54px;transform:scaleX(0.840);font:normal 400 8.4px/11.76px 'Liberation Sans', sans-serif;color:#2a2a2a;-webkit-text-stroke:0.3px #2a2a2a;">6</span>
<span style="left:652.99px;top:458.54px;transform:scaleX(0.840);font:normal 400 8.4px/11.76px 'Liberation Sans', sans-serif;color:#2a2a2a;-webkit-text-stroke:0.3px #2a2a2a;">0.387</span>
<span style="left:710.04px;top:458.54px;transform:scaleX(0.840);font:normal 400 8.4px/11.76px 'Liberation Sans', sans-serif;color:#2a2a2a;-webkit-text-stroke:0.3px #2a2a2a;">0.641</span>
<span style="left:767.09px;top:458.54px;transform:scaleX(0.840);font:normal 400 8.4px/11.76px 'Liberation Sans', sans-serif;color:#2a2a2a;-webkit-text-stroke:0.3px #2a2a2a;">0.495</span>
<span style="left:825.85px;top:458.54px;transform:scaleX(0.840);font:normal 400 8.4px/11.76px 'Liberation Sans', sans-serif;color:#2a2a2a;-webkit-text-stroke:0.3px #2a2a2a;">0.82</span>
<span style="left:373.33px;top:469.63px;transform:scaleX(0.840);font:normal 400 8.4px/11.76px 'Liberation Sans', sans-serif;color:#2a2a2a;-webkit-text-stroke:0.3px #2a2a2a;">70</span>
<span style="left:429.73px;top:469.63px;transform:scaleX(0.840);font:normal 400 8.4px/11.76px 'Liberation Sans', sans-serif;color:#2a2a2a;-webkit-text-stroke:0.3px #2a2a2a;">19</span>
<span style="left:486.88px;top:469.63px;transform:scaleX(0.840);font:normal 400 8.4px/11.76px 'Liberation Sans', sans-serif;color:#2a2a2a;-webkit-text-stroke:0.3px #2a2a2a;">19</span>
<span style="left:543.93px;top:469.63px;transform:scaleX(0.840);font:normal 400 8.4px/11.76px 'Liberation Sans', sans-serif;color:#2a2a2a;-webkit-text-stroke:0.3px #2a2a2a;">12</span>
<span style="left:600.93px;top:469.63px;transform:scaleX(0.840);font:normal 400 8.4px/11.76px 'Liberation Sans', sans-serif;color:#2a2a2a;-webkit-text-stroke:0.3px #2a2a2a;">12</span>
<span style="left:652.99px;top:469.63px;transform:scaleX(0.840);font:normal 400 8.4px/11.76px 'Liberation Sans', sans-serif;color:#2a2a2a;-webkit-text-stroke:0.3px #2a2a2a;">0.268</span>
<span style="left:710.04px;top:469.63px;transform:scaleX(0.840);font:normal 400 8.4px/11.76px 'Liberation Sans', sans-serif;color:#2a2a2a;-webkit-text-stroke:0.3px #2a2a2a;">0.443</span>
<span style="left:767.09px;top:469.63px;transform:scaleX(0.840);font:normal 400 8.4px/11.76px 'Liberation Sans', sans-serif;color:#2a2a2a;-webkit-text-stroke:0.3px #2a2a2a;">0.343</span>
<span style="left:823.89px;top:469.63px;transform:scaleX(0.840);font:normal 400 8.4px/11.76px 'Liberation Sans', sans-serif;color:#2a2a2a;-webkit-text-stroke:0.3px #2a2a2a;">0.567</span>
<span style="left:373.33px;top:480.72px;transform:scaleX(0.840);font:normal 400 8.4px/11.76px 'Liberation Sans', sans-serif;color:#2a2a2a;-webkit-text-stroke:0.3px #2a2a2a;">95</span>
<span style="left:429.73px;top:480.72px;transform:scaleX(0.840);font:normal 400 8.4px/11.76px 'Liberation Sans', sans-serif;color:#2a2a2a;-webkit-text-stroke:0.3px #2a2a2a;">19</span>
<span style="left:486.88px;top:480.72px;transform:scaleX(0.840);font:normal 400 8.4px/11.76px 'Liberation Sans', sans-serif;color:#2a2a2a;-webkit-text-stroke:0.3px #2a2a2a;">19</span>
<span style="left:543.93px;top:480.72px;transform:scaleX(0.840);font:normal 400 8.4px/11.76px 'Liberation Sans', sans-serif;color:#2a2a2a;-webkit-text-stroke:0.3px #2a2a2a;">15</span>
<span style="left:600.93px;top:480.72px;transform:scaleX(0.840);font:normal 400 8.4px/11.76px 'Liberation Sans', sans-serif;color:#2a2a2a;-webkit-text-stroke:0.3px #2a2a2a;">15</span>
<span style="left:652.99px;top:480.72px;transform:scaleX(0.840);font:normal 400 8.4px/11.76px 'Liberation Sans', sans-serif;color:#2a2a2a;-webkit-text-stroke:0.3px #2a2a2a;">0.193</span>
<span style="left:710.04px;top:480.72px;transform:scaleX(0.840);font:normal 400 8.4px/11.76px 'Liberation Sans', sans-serif;color:#2a2a2a;-webkit-text-stroke:0.3px #2a2a2a;">0.320</span>
<span style="left:767.09px;top:480.72px;transform:scaleX(0.840);font:normal 400 8.4px/11.76px 'Liberation Sans', sans-serif;color:#2a2a2a;-webkit-text-stroke:0.3px #2a2a2a;">0.247</span>
<span style="left:823.89px;top:480.72px;transform:scaleX(0.840);font:normal 400 8.4px/11.76px 'Liberation Sans', sans-serif;color:#2a2a2a;-webkit-text-stroke:0.3px #2a2a2a;">0.410</span>
<span style="left:371.38px;top:491.81px;transform:scaleX(0.840);font:normal 400 8.4px/11.76px 'Liberation Sans', sans-serif;color:#2a2a2a;-webkit-text-stroke:0.3px #2a2a2a;">120</span>
<span style="left:429.73px;top:491.81px;transform:scaleX(0.840);font:normal 400 8.4px/11.76px 'Liberation Sans', sans-serif;color:#2a2a2a;-webkit-text-stroke:0.3px #2a2a2a;">37</span>
<span style="left:486.88px;top:491.81px;transform:scaleX(0.840);font:normal 400 8.4px/11.76px 'Liberation Sans', sans-serif;color:#2a2a2a;-webkit-text-stroke:0.3px #2a2a2a;">37</span>
<span style="left:543.93px;top:491.81px;transform:scaleX(0.840);font:normal 400 8.4px/11.76px 'Liberation Sans', sans-serif;color:#2a2a2a;-webkit-text-stroke:0.3px #2a2a2a;">18</span>
<span style="left:600.93px;top:491.81px;transform:scaleX(0.840);font:normal 400 8.4px/11.76px 'Liberation Sans', sans-serif;color:#2a2a2a;-webkit-text-stroke:0.3px #2a2a2a;">15</span>
<span style="left:652.99px;top:491.81px;transform:scaleX(0.840);font:normal 400 8.4px/11.76px 'Liberation Sans', sans-serif;color:#2a2a2a;-webkit-text-stroke:0.3px #2a2a2a;">0.153</span>
<span style="left:710.04px;top:491.81px;transform:scaleX(0.840);font:normal 400 8.4px/11.76px 'Liberation Sans', sans-serif;color:#2a2a2a;-webkit-text-stroke:0.3px #2a2a2a;">0.253</span>
<span style="left:767.09px;top:491.81px;transform:scaleX(0.840);font:normal 400 8.4px/11.76px 'Liberation Sans', sans-serif;color:#2a2a2a;-webkit-text-stroke:0.3px #2a2a2a;">0.196</span>
<span style="left:823.89px;top:491.81px;transform:scaleX(0.840);font:normal 400 8.4px/11.76px 'Liberation Sans', sans-serif;color:#2a2a2a;-webkit-text-stroke:0.3px #2a2a2a;">0.324</span>
<div style="left:876.20px;top:264.40px;width:130.80px;height:240.60px;background:#222;"></div>
<span style="left:905.00px;top:268.98px;transform:scaleX(1.148);font:normal 700 10.6px/14.84px 'Liberation Sans', sans-serif;color:#fff;">Temperature (ºC)</span>
<div style="left:891.60px;top:286.30px;width:115.40px;height:17.00px;background:#191919;"></div>
<span style="left:947.90px;top:287.28px;font:normal 400 10.6px/14.84px 'Liberation Sans', sans-serif;color:#e8e8e8;">25</span>
<span style="left:947.90px;top:305.96px;font:normal 400 10.6px/14.84px 'Liberation Sans', sans-serif;color:#e8e8e8;">40</span>
<div style="left:891.60px;top:323.66px;width:115.40px;height:17.00px;background:#191919;"></div>
<span style="left:947.90px;top:324.64px;font:normal 400 10.6px/14.84px 'Liberation Sans', sans-serif;color:#e8e8e8;">50</span>
<span style="left:947.90px;top:343.32px;font:normal 400 10.6px/14.84px 'Liberation Sans', sans-serif;color:#e8e8e8;">55</span>
<div style="left:891.60px;top:361.02px;width:115.40px;height:17.00px;background:#191919;"></div>
<span style="left:947.90px;top:362.00px;font:normal 400 10.6px/14.84px 'Liberation Sans', sans-serif;color:#e8e8e8;">60</span>
<span style="left:947.90px;top:380.68px;font:normal 400 10.6px/14.84px 'Liberation Sans', sans-serif;color:#e8e8e8;">65</span>
<div style="left:891.60px;top:398.38px;width:115.40px;height:17.00px;background:#191919;"></div>
<span style="left:947.90px;top:399.36px;font:normal 400 10.6px/14.84px 'Liberation Sans', sans-serif;color:#e8e8e8;">70</span>
<span style="left:947.90px;top:418.04px;font:normal 400 10.6px/14.84px 'Liberation Sans', sans-serif;color:#e8e8e8;">75</span>
<div style="left:891.60px;top:435.74px;width:115.40px;height:17.00px;background:#191919;"></div>
<span style="left:947.90px;top:436.72px;font:normal 400 10.6px/14.84px 'Liberation Sans', sans-serif;color:#e8e8e8;">80</span>
<span style="left:947.90px;top:455.40px;font:normal 400 10.6px/14.84px 'Liberation Sans', sans-serif;color:#e8e8e8;">85</span>
<div style="left:891.60px;top:473.10px;width:115.40px;height:17.00px;background:#191919;"></div>
<span style="left:947.90px;top:474.08px;font:normal 400 10.6px/14.84px 'Liberation Sans', sans-serif;color:#e8e8e8;">90</span>
<span style="left:944.96px;top:492.76px;font:normal 400 10.6px/14.84px 'Liberation Sans', sans-serif;color:#e8e8e8;">100</span>
<div style="left:54.00px;top:505.00px;width:953.00px;height:14.40px;background:#efefef;"></div>
<div style="left:54.00px;top:504.50px;width:953.00px;height:1.00px;background:#d8d8d8;"></div>
<div style="left:54.00px;top:519.40px;width:953.00px;height:15.10px;background:#fff;"></div>
<div style="left:54.00px;top:519.10px;width:953.00px;height:1.00px;background:#e6e6e6;"></div>
<svg style="left:67.40px;top:510.00px;" width="3.00" height="5.00" viewBox="0 0 3 5"><polygon points="3,0 3,5 0,2.5" fill="#d0d0d0"/></svg>
<svg style="left:81.60px;top:510.00px;" width="3.00" height="5.00" viewBox="0 0 3 5"><polygon points="0,0 0,5 3,2.5" fill="#4a4a4a"/></svg>
<div style="left:106.00px;top:507.50px;width:1.00px;height:10.00px;background:#c8c8c8;"></div>
<span style="left:116.00px;top:504.12px;transform:scaleX(0.922);font:normal 400 9.4px/13.16px 'Liberation Sans', sans-serif;color:#646464;">1.Solar Design Calculator</span>
<div style="left:226.50px;top:505.00px;width:124.80px;height:13.40px;background:#fff;"></div>
<div style="left:226.50px;top:517.60px;width:124.80px;height:1.60px;background:#3c8a63;"></div>
<span style="left:233.30px;top:504.26px;transform:scaleX(0.969);font:normal 700 9.2px/12.88px 'Liberation Sans', sans-serif;color:#2a7a52;">2.Voltage Drop Calculator</span>
<span style="left:357.50px;top:504.12px;transform:scaleX(0.885);font:normal 400 9.4px/13.16px 'Liberation Sans', sans-serif;color:#646464;">Sheet1</span>
<div style="left:391.50px;top:507.50px;width:1.00px;height:10.00px;background:#c8c8c8;"></div>
<span style="left:402.00px;top:504.12px;transform:scaleX(0.941);font:normal 400 9.4px/13.16px 'Liberation Sans', sans-serif;color:#646464;">3.Current Carrying Capacity</span>
<div style="left:523.30px;top:507.50px;width:1.00px;height:10.00px;background:#c8c8c8;"></div>
<span style="left:533.00px;top:504.12px;transform:scaleX(0.970);font:normal 400 9.4px/13.16px 'Liberation Sans', sans-serif;color:#646464;">4.Short Circuit Curre ...</span>
<svg style="left:632.30px;top:507.80px;" width="10.00" height="10.00" viewBox="0 0 10 10"><circle cx="5" cy="5" r="4.3" fill="none" stroke="#8a8a8a" stroke-width="0.9"/><path d="M5 2.6V7.4M2.6 5H7.4" stroke="#8a8a8a" stroke-width="0.9"/></svg>
<div style="left:651.40px;top:509.60px;width:1.00px;height:1.00px;background:#c0c0c0;"></div>
<div style="left:651.40px;top:512.20px;width:1.00px;height:1.00px;background:#c0c0c0;"></div>
<div style="left:651.40px;top:514.80px;width:1.00px;height:1.00px;background:#c0c0c0;"></div>
<div style="left:661.30px;top:508.30px;width:10.00px;height:9.50px;box-sizing:border-box;border:1px solid #dcdcdc;background:#fff;"></div>
<svg style="left:664.80px;top:510.80px;" width="3.00" height="4.60" viewBox="0 0 3 4.6"><polygon points="3,0 3,4.6 0,2.3" fill="#555"/></svg>
<div style="left:671.00px;top:508.30px;width:301.00px;height:9.50px;box-sizing:border-box;border:1px solid #dcdcdc;background:#fff;"></div>
<span style="left:57.50px;top:523.00px;transform:scaleX(0.914);font:normal 400 7px/9.80px 'Liberation Sans', sans-serif;color:#8a8a8a;">Ready</span>
<div style="left:861.00px;top:520.60px;width:24.00px;height:13.70px;background:#d2d2d2;"></div>
<svg style="left:867.50px;top:522.40px;" width="10.00" height="9.00" viewBox="0 0 10 9"><rect x="0.5" y="0.5" width="9" height="8" fill="none" stroke="#555" stroke-width="0.9"/><path d="M0.5 3.2H9.5M0.5 5.8H9.5M3.5 0.5V8.5M6.5 0.5V8.5" stroke="#555" stroke-width="0.8"/></svg>
<svg style="left:893.00px;top:522.40px;" width="10.00" height="9.00" viewBox="0 0 10 9"><rect x="0.5" y="0.5" width="9" height="8" fill="none" stroke="#777" stroke-width="0.9"/><rect x="2.6" y="2.4" width="4.8" height="4.4" fill="none" stroke="#777" stroke-width="0.8"/></svg>
<svg style="left:919.20px;top:522.40px;" width="10.00" height="9.00" viewBox="0 0 10 9"><rect x="0.5" y="0.5" width="9" height="8" fill="none" stroke="#777" stroke-width="0.9"/><path d="M3.4 0.5V4.4H6.8V0.5" stroke="#777" stroke-width="0.8" fill="none"/></svg>
<div style="left:941.20px;top:526.55px;width:4.80px;height:0.90px;background:#777;"></div>
<div style="left:950.00px;top:526.55px;width:57.00px;height:0.90px;background:#bdbdbd;"></div>
<div style="left:981.60px;top:522.80px;width:2.00px;height:8.40px;background:#555;"></div>
<div style="left:1007.00px;top:0.00px;width:17.00px;height:576.00px;background:#242424;"></div>
<div style="left:40.00px;top:534.50px;width:984.00px;height:41.50px;background:#242424;"></div>
</div>
</body>
</html>
